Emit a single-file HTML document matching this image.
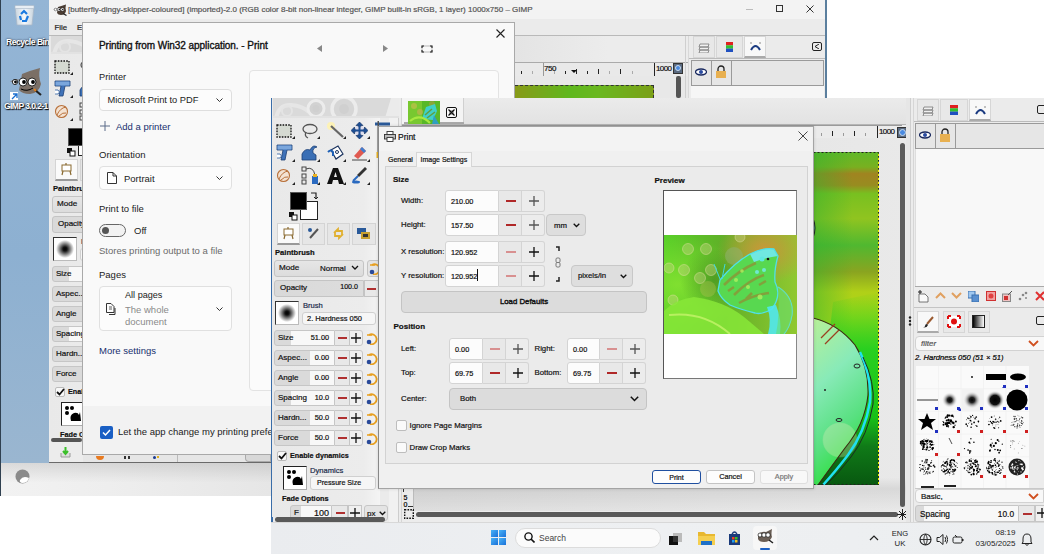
<!DOCTYPE html>
<html><head><meta charset="utf-8">
<style>
*{margin:0;padding:0;box-sizing:border-box}
html,body{width:1044px;height:554px;overflow:hidden;background:#fff;font-family:"Liberation Sans",sans-serif;position:relative}
.a{position:absolute}
.t{position:absolute;white-space:nowrap;line-height:1;color:#1a1a1a;-webkit-text-stroke:.2px currentColor}
.b{font-weight:bold}
</style></head><body>
<div class="a" style="left:0px;top:0px;width:49px;height:463px;background:linear-gradient(180deg,#94b5d5,#8db0d1 55%,#9ab6d0);border-left:1px solid #2f4050"></div>
<svg class="a" style="left:14px;top:4px;" width="21" height="22" viewBox="0 0 21 22"><defs><linearGradient id="rb" x1="0" y1="0" x2="1" y2="0"><stop offset="0" stop-color="#c8d4de"/><stop offset=".5" stop-color="#f4f7fa"/><stop offset="1" stop-color="#c8d4de"/></linearGradient></defs><path d="M1 3 H20 L18 21 H3 Z" fill="url(#rb)" stroke="#a8b8c8" stroke-width=".8"/><rect x="1" y="1.5" width="19" height="3" fill="#e8eef4" stroke="#a8b8c8" stroke-width=".6"/><path d="M7 10 L10 7 L13 10 M14 12 L12 17 H8 M7 16 L6 12" fill="none" stroke="#1a7ae0" stroke-width="2.2"/></svg>
<div class="t" style="left:6px;top:37.7px;font-size:8.6px;-webkit-text-stroke:0;color:#fff;font-weight:bold;text-shadow:1px 1px 1px #000,0 0 2px #223;letter-spacing:-.5px">Recycle Bin</div>
<svg class="a" style="left:8px;top:66px;" width="36" height="31" viewBox="0 0 36 31"><path d="M14 8 Q24 4 32 2 Q30 10 33 18 Q31 27 22 28 Q14 28 11 24 Z" fill="#7b6f66"/><path d="M2 16 Q6 12 12 14" fill="#7b6f66"/><circle cx="7" cy="16" r="2.6" fill="#fff" stroke="#000" stroke-width=".8"/><circle cx="15" cy="16" r="4" fill="#fff" stroke="#000" stroke-width=".8"/><circle cx="24" cy="16" r="4" fill="#fff" stroke="#000" stroke-width=".8"/><circle cx="7.5" cy="16" r="1.4"/><circle cx="16" cy="16" r="1.9"/><circle cx="25" cy="16" r="1.9"/><path d="M13 23 Q19 26 25 22" fill="none" stroke="#000" stroke-width="1"/><path d="M27 24 L33 29" stroke="#222" stroke-width="2.2"/><path d="M26 23 L28 25" stroke="#e08020" stroke-width="2"/></svg>
<div class="a" style="left:10px;top:92px;width:8px;height:8px;background:#fff"></div>
<svg class="a" style="left:11px;top:93px;" width="7" height="7" viewBox="0 0 7 7"><path d="M1 6 L6 1 M2 1 H6 V5" fill="none" stroke="#1a6fd0" stroke-width="1.3"/></svg>
<div class="t" style="left:4px;top:102.2px;font-size:8.6px;-webkit-text-stroke:0;color:#fff;font-weight:bold;text-shadow:1px 1px 1px #000,0 0 2px #223;letter-spacing:-.6px">GIMP 3.0.2-1</div>
<div class="a" style="left:49px;top:0px;width:778px;height:463px;background:#ececec"></div>
<div class="a" style="left:825px;top:0px;width:2px;height:463px;background:#5b7f9e"></div>
<div class="a" style="left:49px;top:0px;width:776px;height:19px;background:#f3f3f3"></div>
<svg class="a" style="left:53px;top:4px;" width="14" height="12" viewBox="0 0 14 12"><path d="M5 3 Q9 1.5 13 0.5 Q12 4 13 7 Q12 11 8 11 Q5 11 4 9 Z" fill="#4a3c32"/><path d="M0.5 6 Q2 4 5 5" fill="#4a3c32"/><circle cx="2.5" cy="5.5" r="1.3" fill="#fff" stroke="#000" stroke-width=".4"/><circle cx="6" cy="5.5" r="1.7" fill="#fff" stroke="#000" stroke-width=".4"/><circle cx="9.5" cy="5.5" r="1.7" fill="#fff" stroke="#000" stroke-width=".4"/><circle cx="6.3" cy="5.5" r=".7"/><circle cx="9.8" cy="5.5" r=".7"/><path d="M10 9.5 L13.5 11.5" stroke="#222" stroke-width="1.2"/></svg>
<div class="t" style="left:68px;top:6.0px;font-size:8px;color:#555">[butterfly-dingy-skipper-coloured] (imported)-2.0 (RGB color 8-bit non-linear integer, GIMP built-in sRGB, 1 layer) 1000x750 – GIMP</div>
<div class="a" style="left:746px;top:9px;width:7px;height:1px;background:#bbb"></div>
<div class="a" style="left:776px;top:5px;width:7px;height:7px;border:1.2px solid #333"></div>
<svg class="a" style="left:806px;top:5px;" width="8" height="8" viewBox="0 0 8 8"><path d="M0.5 0.5 L7.5 7.5 M7.5 0.5 L0.5 7.5" stroke="#333" stroke-width="1"/></svg>
<div class="a" style="left:49px;top:19px;width:776px;height:16px;background:#ebebeb"></div>
<div class="a" style="left:49px;top:35px;width:776px;height:1px;background:#b9b9b9"></div>
<div class="t" style="left:54.5px;top:24.1px;font-size:7.8px;color:#1a1a1a">File</div>
<div class="t" style="left:77px;top:24.1px;font-size:7.8px;color:#1a1a1a">Ed</div>
<div class="a" style="left:49px;top:36px;width:34px;height:402px;overflow:hidden;">
<div class="a" style="left:1px;top:-2px;width:108px;height:602px;background:linear-gradient(90deg,#e9e9e9,#ececec 85%,#f4f4f4)"></div>
<svg class="a" style="left:2px;top:-2px;" width="126" height="20" viewBox="0 0 126 20"><rect width="126" height="20" fill="#ebebeb"/><path d="M0 0 H118 L112 20 H0 Z" fill="#dadada"/><path d="M3 20 Q6 6 18 7 Q30 8 36 14" fill="none" stroke="#e6e6e6" stroke-width="4"/><circle cx="14" cy="13" r="5" fill="none" stroke="#e4e4e4" stroke-width="2"/><circle cx="43" cy="10.5" r="8" fill="#d2d2d2" stroke="#ececec" stroke-width="3"/><circle cx="43" cy="10.5" r="3.5" fill="#cfcfcf"/><circle cx="71" cy="11" r="12" fill="#d6d6d6" stroke="#ececec" stroke-width="3.5"/><circle cx="71" cy="11" r="5" fill="#d0d0d0"/><rect y="18" width="126" height="2" fill="#e2e2e2"/></svg>
<svg class="a" style="left:5px;top:24px;" width="16" height="14" viewBox="0 0 16 14"><rect x="1" y="1" width="14" height="12" fill="#d5dad2" stroke="#111" stroke-width="1.3" stroke-dasharray="1.6,1.2"/></svg>
<svg class="a" style="left:30px;top:23px;" width="17" height="16" viewBox="0 0 17 16"><ellipse cx="9" cy="6" rx="7" ry="4.5" fill="none" stroke="#555" stroke-width="1.3"/><path d="M5 9 Q3 13 7 15" fill="none" stroke="#555" stroke-width="1.2"/></svg>
<svg class="a" style="left:56px;top:22px;" width="18" height="17" viewBox="0 0 18 17"><circle cx="4" cy="4" r="4" fill="#fff3b0" opacity=".9"/><line x1="4" y1="4" x2="16" y2="15" stroke="#666" stroke-width="2.2"/></svg>
<svg class="a" style="left:80px;top:22px;" width="17" height="17" viewBox="0 0 17 17"><path d="M8.5 0 L12 3.5 H10 V7 H13.5 V5 L17 8.5 L13.5 12 V10 H10 V13.5 H12 L8.5 17 L5 13.5 H7 V10 H3.5 V12 L0 8.5 L3.5 5 V7 H7 V3.5 H5 Z" fill="#1e4f94" stroke="#0d2d5e" stroke-width=".6"/><rect x="4.5" y="4.5" width="3" height="3" fill="#dde"/><rect x="9.5" y="4.5" width="3" height="3" fill="#dde"/><rect x="4.5" y="9.5" width="3" height="3" fill="#dde"/><rect x="9.5" y="9.5" width="3" height="3" fill="#dde"/></svg>
<svg class="a" style="left:103px;top:21px;" width="16" height="40" viewBox="0 0 16 40"><rect x="1" y="1.5" width="15" height="3" fill="#2a5a9a"/><rect x="3.5" y="0" width="1.5" height="36" fill="#555"/><rect x="2.5" y="31" width="4" height="6" fill="#e8b020"/></svg>
<svg class="a" style="left:5px;top:44px;" width="17" height="18" viewBox="0 0 17 18"><path d="M1 1 H16 V6 H11 L9 16 H5 L7 6 H1 Z" fill="#3f72b8" stroke="#1d3f73" stroke-width=".8"/><rect x="1.5" y="1.5" width="14" height="4" fill="#7aa6dc"/><path d="M1 10 H4 L5.5 12 L4 14 H1" fill="#fff" stroke="#2a5aa0" stroke-width=".8"/></svg>
<svg class="a" style="left:30px;top:44px;" width="18" height="17" viewBox="0 0 18 17"><path d="M1 16 V10 Q4 4 9 6 Q12 0 16 3 Q11 4 12 9 L15 11 V16 Z" fill="#3a6fb5" stroke="#1d3f73" stroke-width=".8"/></svg>
<svg class="a" style="left:56px;top:44px;" width="18" height="17" viewBox="0 0 18 17"><path d="M4 6 L11 2 L16 10 L9 15 Z" fill="#fff" stroke="#1d3560" stroke-width="1.2"/><circle cx="10" cy="8" r="1.5" fill="none" stroke="#1d3560"/><path d="M1 8 Q4 5 6 8 V12" fill="none" stroke="#1d5fb5" stroke-width="2"/></svg>
<svg class="a" style="left:80px;top:44px;" width="17" height="17" viewBox="0 0 17 17"><path d="M3 12 L11 3 L15 7 L7 15 Z" fill="#e05a50"/><path d="M9 5 L11 3 L15 7 L13 9 Z" fill="#3f7fd0"/><line x1="1" y1="16" x2="16" y2="16" stroke="#444" stroke-width="1"/></svg>
<svg class="a" style="left:5px;top:68px;" width="15" height="15" viewBox="0 0 15 15"><circle cx="7.5" cy="7.5" r="6" fill="#f3e2d2" stroke="#b8703a" stroke-width="1.1"/><path d="M3 11 Q6 4 12 3 M5 12 Q9 8 12 9" fill="none" stroke="#b8703a" stroke-width="1"/></svg>
<svg class="a" style="left:30px;top:66px;" width="18" height="19" viewBox="0 0 18 19"><rect x="1" y="1" width="4" height="4" fill="none" stroke="#444"/><rect x="1" y="8" width="4" height="4" fill="none" stroke="#444"/><rect x="1" y="14" width="4" height="4" fill="none" stroke="#444"/><path d="M5 3 Q12 0 14 9" fill="none" stroke="#444"/><rect x="11" y="10" width="6" height="8" fill="#2a6ac0"/><rect x="12" y="8" width="4" height="3" fill="#e8b020"/></svg>
<svg class="a" style="left:55px;top:67px;" width="19" height="17" viewBox="0 0 19 17"><path d="M1 17 L7 1 H12 L18 17 H13 L12 13 H7 L6 17 Z M8 10 H11 L9.5 5 Z" fill="#111"/></svg>
<svg class="a" style="left:80px;top:66px;" width="17" height="18" viewBox="0 0 17 18"><path d="M14 1 L16 3 L8 11 L6 9 Z" fill="#333"/><path d="M7 10 L2 15" stroke="#2a6ac0" stroke-width="2"/><ellipse cx="5" cy="16" rx="4" ry="1.5" fill="#2a6ac0"/></svg>
<svg class="a" style="left:21px;top:36px;" width="3" height="3" viewBox="0 0 3 3"><path d="M3 0 V3 H0 Z" fill="#222"/></svg>
<svg class="a" style="left:46px;top:36px;" width="3" height="3" viewBox="0 0 3 3"><path d="M3 0 V3 H0 Z" fill="#222"/></svg>
<svg class="a" style="left:72px;top:36px;" width="3" height="3" viewBox="0 0 3 3"><path d="M3 0 V3 H0 Z" fill="#222"/></svg>
<svg class="a" style="left:96px;top:36px;" width="3" height="3" viewBox="0 0 3 3"><path d="M3 0 V3 H0 Z" fill="#222"/></svg>
<svg class="a" style="left:21px;top:59px;" width="3" height="3" viewBox="0 0 3 3"><path d="M3 0 V3 H0 Z" fill="#222"/></svg>
<svg class="a" style="left:46px;top:59px;" width="3" height="3" viewBox="0 0 3 3"><path d="M3 0 V3 H0 Z" fill="#222"/></svg>
<svg class="a" style="left:72px;top:59px;" width="3" height="3" viewBox="0 0 3 3"><path d="M3 0 V3 H0 Z" fill="#222"/></svg>
<svg class="a" style="left:96px;top:59px;" width="3" height="3" viewBox="0 0 3 3"><path d="M3 0 V3 H0 Z" fill="#222"/></svg>
<svg class="a" style="left:21px;top:82px;" width="3" height="3" viewBox="0 0 3 3"><path d="M3 0 V3 H0 Z" fill="#222"/></svg>
<svg class="a" style="left:46px;top:82px;" width="3" height="3" viewBox="0 0 3 3"><path d="M3 0 V3 H0 Z" fill="#222"/></svg>
<svg class="a" style="left:72px;top:82px;" width="3" height="3" viewBox="0 0 3 3"><path d="M3 0 V3 H0 Z" fill="#222"/></svg>
<svg class="a" style="left:96px;top:82px;" width="3" height="3" viewBox="0 0 3 3"><path d="M3 0 V3 H0 Z" fill="#222"/></svg>
<div class="a" style="left:29px;top:101px;width:18px;height:19px;background:#fff;border:1px solid #222"></div>
<div class="a" style="left:19px;top:92px;width:17px;height:18px;background:#000;border:1px solid #555"></div>
<svg class="a" style="left:39px;top:91px;" width="9" height="9" viewBox="0 0 9 9"><path d="M1 2 H6 V7" fill="none" stroke="#222" stroke-width="1.2"/><path d="M4 6 L6 8 L8 6" fill="none" stroke="#222"/></svg>
<svg class="a" style="left:18px;top:112px;" width="9" height="9" viewBox="0 0 9 9"><rect x="0" y="0" width="5" height="5" fill="#111"/><rect x="3" y="3" width="5" height="5" fill="#fff" stroke="#111"/></svg>
<div class="a" style="left:6px;top:123px;width:23px;height:22px;background:#fafafa;border:1px solid #d4d4d4;border-bottom:2px solid #999"></div>
<div class="a" style="left:31px;top:123px;width:23px;height:22px;background:#e6e6e6;border:1px solid #d4d4d4"></div>
<div class="a" style="left:56px;top:123px;width:23px;height:22px;background:#e6e6e6;border:1px solid #d4d4d4"></div>
<div class="a" style="left:81px;top:123px;width:24px;height:22px;background:#e6e6e6;border:1px solid #d4d4d4"></div>
<svg class="a" style="left:11px;top:127px;" width="13" height="13" viewBox="0 0 13 13"><rect x="2" y="2" width="9" height="6" fill="#fff" stroke="#8a6a30"/><path d="M3 8 L2 12 M10 8 L11 12 M6 0 V2" stroke="#8a6a30" stroke-width="1.2"/></svg>
<svg class="a" style="left:36px;top:127px;" width="13" height="13" viewBox="0 0 13 13"><circle cx="3" cy="3" r="2" fill="#2a5a9a"/><path d="M3 11 L11 2" stroke="#555" stroke-width="2"/></svg>
<svg class="a" style="left:61px;top:127px;" width="13" height="13" viewBox="0 0 13 13"><path d="M2 6 L6 2 V4 H10 V8 M11 7 L7 11 V9 H3 V5" fill="none" stroke="#e0b030" stroke-width="1.8"/></svg>
<svg class="a" style="left:86px;top:127px;" width="13" height="13" viewBox="0 0 13 13"><rect x="0" y="1" width="9" height="6" fill="#2a5a9a"/><rect x="4" y="5" width="9" height="7" fill="#c8a030"/><rect x="6" y="7" width="5" height="3" fill="#333"/></svg>
<div class="t" style="left:4px;top:149.2px;font-size:7.6px;font-weight:bold;color:#111">Paintbrush</div>
<div class="a" style="left:3px;top:160px;width:90px;height:17px;background:linear-gradient(#e6e6e6,#dcdcdc);border:1px solid #c4c4c4;border-radius:3px"></div>
<div class="t" style="left:8px;top:164.4px;font-size:8.1px;color:#111">Mode</div>
<div class="t" style="left:49px;top:164.5px;font-size:8px;color:#111">Normal</div>
<svg class="a" style="left:80px;top:165px;" width="8" height="6" viewBox="0 0 8 6"><path d="M1 1 L4 4 L7 1" fill="none" stroke="#111" stroke-width="1.3"/></svg>
<div class="a" style="left:96px;top:160px;width:14px;height:17px;background:#e4e4e4;border:1px solid #c4c4c4;border-radius:3px"></div>
<svg class="a" style="left:97px;top:162px;" width="13" height="13" viewBox="0 0 13 13"><path d="M4 3 A5 5 0 1 1 5 12" fill="none" stroke="#e8a020" stroke-width="1.8"/><circle cx="4" cy="10" r="2.3" fill="#2a4a9a"/><path d="M2 3 H7" stroke="#e8a020" stroke-width="1.5"/></svg>
<div class="a" style="left:3px;top:180px;width:90px;height:17px;background:linear-gradient(90deg,#d9d9d9,#dddddd);border:1px solid #c4c4c4;border-radius:3px 0 0 3px"></div>
<div class="t" style="left:9px;top:183.5px;font-size:8px;color:#111">Opacity</div>
<div class="t" style="left:29px;top:183.9px;font-size:7.1px;width:58px;text-align:right;color:#111">100.0</div>
<div class="a" style="left:93px;top:180px;width:16px;height:17px;background:#e8e8e8;border:1px solid #c4c4c4"></div>
<div class="a" style="left:96px;top:188px;width:9px;height:2px;background:#b03030"></div>
<div class="a" style="left:4px;top:201px;width:24px;height:24px;background:radial-gradient(circle,#000 0,#111 2px,#777 5px,#fff 9px);border:1px solid #333;border-right-color:#bbb;border-bottom-color:#bbb"></div>
<div class="t" style="left:32px;top:201.7px;font-size:7.6px;color:#1a2a4a">Brush</div>
<div class="a" style="left:31px;top:212px;width:74px;height:13px;background:#f6f6f6;border:1px solid #d0d0d0;border-radius:3px"></div>
<div class="t" style="left:36px;top:215.2px;font-size:7.5px;color:#111">2. Hardness 050</div>
<div class="a" style="left:3px;top:230px;width:61px;height:16px;background:linear-gradient(90deg,#dadada 0,#dadada 16px,#f8f8f8 16px);border:1px solid #c6c6c6;border-radius:3px 0 0 3px"></div>
<div class="t" style="left:7px;top:233.5px;font-size:8px;color:#111">Size</div>
<div class="t" style="left:19px;top:233.8px;font-size:7.3px;width:39px;text-align:right;color:#111">51.00</div>
<div class="a" style="left:64px;top:230px;width:15px;height:16px;background:#e8e8e8;border:1px solid #c6c6c6;border-left:none"></div>
<div class="a" style="left:67px;top:237px;width:9px;height:2px;background:#b03030"></div>
<div class="a" style="left:78px;top:230px;width:14px;height:16px;background:#f0f0f0;border:1px solid #c6c6c6;border-radius:0 3px 3px 0"></div>
<svg class="a" style="left:80px;top:233px;" width="10" height="10" viewBox="0 0 10 10"><path d="M5 0 V10 M0 5 H10" stroke="#111" stroke-width="1.3"/></svg>
<svg class="a" style="left:94px;top:232px;" width="13" height="13" viewBox="0 0 13 13"><path d="M4 3 A5 5 0 1 1 5 12" fill="none" stroke="#e8a020" stroke-width="1.8"/><circle cx="4" cy="10" r="2.3" fill="#2a4a9a"/><path d="M2 3 H7" stroke="#e8a020" stroke-width="1.5"/></svg>
<div class="a" style="left:3px;top:250px;width:61px;height:16px;background:linear-gradient(90deg,#dadada 0,#dadada 35px,#f8f8f8 35px);border:1px solid #c6c6c6;border-radius:3px 0 0 3px"></div>
<div class="t" style="left:7px;top:253.5px;font-size:8px;color:#111">Aspec...</div>
<div class="t" style="left:19px;top:253.8px;font-size:7.3px;width:39px;text-align:right;color:#111">0.00</div>
<div class="a" style="left:64px;top:250px;width:15px;height:16px;background:#e8e8e8;border:1px solid #c6c6c6;border-left:none"></div>
<div class="a" style="left:67px;top:257px;width:9px;height:2px;background:#b03030"></div>
<div class="a" style="left:78px;top:250px;width:14px;height:16px;background:#f0f0f0;border:1px solid #c6c6c6;border-radius:0 3px 3px 0"></div>
<svg class="a" style="left:80px;top:253px;" width="10" height="10" viewBox="0 0 10 10"><path d="M5 0 V10 M0 5 H10" stroke="#111" stroke-width="1.3"/></svg>
<svg class="a" style="left:94px;top:252px;" width="13" height="13" viewBox="0 0 13 13"><path d="M4 3 A5 5 0 1 1 5 12" fill="none" stroke="#e8a020" stroke-width="1.8"/><circle cx="4" cy="10" r="2.3" fill="#2a4a9a"/><path d="M2 3 H7" stroke="#e8a020" stroke-width="1.5"/></svg>
<div class="a" style="left:3px;top:270px;width:61px;height:16px;background:linear-gradient(90deg,#dadada 0,#dadada 35px,#f8f8f8 35px);border:1px solid #c6c6c6;border-radius:3px 0 0 3px"></div>
<div class="t" style="left:7px;top:273.5px;font-size:8px;color:#111">Angle</div>
<div class="t" style="left:19px;top:273.9px;font-size:7.3px;width:39px;text-align:right;color:#111">0.00</div>
<div class="a" style="left:64px;top:270px;width:15px;height:16px;background:#e8e8e8;border:1px solid #c6c6c6;border-left:none"></div>
<div class="a" style="left:67px;top:277px;width:9px;height:2px;background:#b03030"></div>
<div class="a" style="left:78px;top:270px;width:14px;height:16px;background:#f0f0f0;border:1px solid #c6c6c6;border-radius:0 3px 3px 0"></div>
<svg class="a" style="left:80px;top:273px;" width="10" height="10" viewBox="0 0 10 10"><path d="M5 0 V10 M0 5 H10" stroke="#111" stroke-width="1.3"/></svg>
<svg class="a" style="left:94px;top:272px;" width="13" height="13" viewBox="0 0 13 13"><path d="M4 3 A5 5 0 1 1 5 12" fill="none" stroke="#e8a020" stroke-width="1.8"/><circle cx="4" cy="10" r="2.3" fill="#2a4a9a"/><path d="M2 3 H7" stroke="#e8a020" stroke-width="1.5"/></svg>
<div class="a" style="left:3px;top:290px;width:61px;height:16px;background:linear-gradient(90deg,#dadada 0,#dadada 16px,#f8f8f8 16px);border:1px solid #c6c6c6;border-radius:3px 0 0 3px"></div>
<div class="t" style="left:7px;top:293.5px;font-size:8px;color:#111">Spacing</div>
<div class="t" style="left:19px;top:293.9px;font-size:7.3px;width:39px;text-align:right;color:#111">10.0</div>
<div class="a" style="left:64px;top:290px;width:15px;height:16px;background:#e8e8e8;border:1px solid #c6c6c6;border-left:none"></div>
<div class="a" style="left:67px;top:297px;width:9px;height:2px;background:#b03030"></div>
<div class="a" style="left:78px;top:290px;width:14px;height:16px;background:#f0f0f0;border:1px solid #c6c6c6;border-radius:0 3px 3px 0"></div>
<svg class="a" style="left:80px;top:293px;" width="10" height="10" viewBox="0 0 10 10"><path d="M5 0 V10 M0 5 H10" stroke="#111" stroke-width="1.3"/></svg>
<svg class="a" style="left:94px;top:292px;" width="13" height="13" viewBox="0 0 13 13"><path d="M4 3 A5 5 0 1 1 5 12" fill="none" stroke="#e8a020" stroke-width="1.8"/><circle cx="4" cy="10" r="2.3" fill="#2a4a9a"/><path d="M2 3 H7" stroke="#e8a020" stroke-width="1.5"/></svg>
<div class="a" style="left:3px;top:310px;width:61px;height:16px;background:linear-gradient(90deg,#dadada 0,#dadada 35px,#f8f8f8 35px);border:1px solid #c6c6c6;border-radius:3px 0 0 3px"></div>
<div class="t" style="left:7px;top:313.5px;font-size:8px;color:#111">Hardn...</div>
<div class="t" style="left:19px;top:313.9px;font-size:7.3px;width:39px;text-align:right;color:#111">50.0</div>
<div class="a" style="left:64px;top:310px;width:15px;height:16px;background:#e8e8e8;border:1px solid #c6c6c6;border-left:none"></div>
<div class="a" style="left:67px;top:317px;width:9px;height:2px;background:#b03030"></div>
<div class="a" style="left:78px;top:310px;width:14px;height:16px;background:#f0f0f0;border:1px solid #c6c6c6;border-radius:0 3px 3px 0"></div>
<svg class="a" style="left:80px;top:313px;" width="10" height="10" viewBox="0 0 10 10"><path d="M5 0 V10 M0 5 H10" stroke="#111" stroke-width="1.3"/></svg>
<svg class="a" style="left:94px;top:312px;" width="13" height="13" viewBox="0 0 13 13"><path d="M4 3 A5 5 0 1 1 5 12" fill="none" stroke="#e8a020" stroke-width="1.8"/><circle cx="4" cy="10" r="2.3" fill="#2a4a9a"/><path d="M2 3 H7" stroke="#e8a020" stroke-width="1.5"/></svg>
<div class="a" style="left:3px;top:330px;width:61px;height:16px;background:linear-gradient(90deg,#dadada 0,#dadada 35px,#f8f8f8 35px);border:1px solid #c6c6c6;border-radius:3px 0 0 3px"></div>
<div class="t" style="left:7px;top:333.5px;font-size:8px;color:#111">Force</div>
<div class="t" style="left:19px;top:333.9px;font-size:7.3px;width:39px;text-align:right;color:#111">50.0</div>
<div class="a" style="left:64px;top:330px;width:15px;height:16px;background:#e8e8e8;border:1px solid #c6c6c6;border-left:none"></div>
<div class="a" style="left:67px;top:337px;width:9px;height:2px;background:#b03030"></div>
<div class="a" style="left:78px;top:330px;width:14px;height:16px;background:#f0f0f0;border:1px solid #c6c6c6;border-radius:0 3px 3px 0"></div>
<svg class="a" style="left:80px;top:333px;" width="10" height="10" viewBox="0 0 10 10"><path d="M5 0 V10 M0 5 H10" stroke="#111" stroke-width="1.3"/></svg>
<svg class="a" style="left:94px;top:332px;" width="13" height="13" viewBox="0 0 13 13"><path d="M4 3 A5 5 0 1 1 5 12" fill="none" stroke="#e8a020" stroke-width="1.8"/><circle cx="4" cy="10" r="2.3" fill="#2a4a9a"/><path d="M2 3 H7" stroke="#e8a020" stroke-width="1.5"/></svg>
<div class="a" style="left:6px;top:351px;width:10px;height:10px;background:#f8f8f8;border:1px solid #bbb;border-radius:2px"></div>
<svg class="a" style="left:7px;top:352px;" width="9" height="8" viewBox="0 0 9 8"><path d="M1 4 L3.5 6.5 L8 1" fill="none" stroke="#111" stroke-width="1.8"/></svg>
<div class="t" style="left:19px;top:352.4px;font-size:7.2px;font-weight:bold;color:#111">Enable dynamics</div>
<div class="a" style="left:12px;top:366px;width:24px;height:24px;background:#fff;border:1px solid #222;border-right-color:#aaa;border-bottom-color:#aaa"></div>
<svg class="a" style="left:14px;top:368px;" width="20" height="20" viewBox="0 0 20 20"><circle cx="4" cy="4" r="2" fill="#000"/><circle cx="9" cy="4" r="2" fill="#000"/><circle cx="4" cy="9" r="2" fill="#000"/><path d="M8 17 Q6 11 11 9 Q15 8 16 11 L17 8 L18 17 Z" fill="#000"/></svg>
<div class="t" style="left:39px;top:366.7px;font-size:7.6px;color:#1a2a4a">Dynamics</div>
<div class="a" style="left:39px;top:376px;width:66px;height:14px;background:#f6f6f6;border:1px solid #d0d0d0;border-radius:3px"></div>
<div class="t" style="left:46px;top:379.9px;font-size:7.1px;color:#111">Pressure Size</div>
<div class="t" style="left:11px;top:394.9px;font-size:7.3px;font-weight:bold;color:#111">Fade Options</div>
<div class="a" style="left:19px;top:405px;width:42px;height:16px;background:linear-gradient(90deg,#dadada 0,#dadada 10px,#f8f8f8 10px);border:1px solid #c6c6c6;border-radius:3px 0 0 3px"></div>
<div class="t" style="left:23px;top:409.0px;font-size:8px;color:#111">F</div>
<div class="t" style="left:29px;top:408.5px;font-size:9px;width:29px;text-align:right;color:#111">100</div>
<div class="a" style="left:61px;top:405px;width:16px;height:16px;background:#e8e8e8;border:1px solid #c6c6c6;border-left:none"></div>
<div class="a" style="left:65px;top:412px;width:9px;height:2px;background:#b03030"></div>
<div class="a" style="left:77px;top:405px;width:14px;height:16px;background:#f0f0f0;border:1px solid #c6c6c6"></div>
<svg class="a" style="left:79px;top:408px;" width="10" height="10" viewBox="0 0 10 10"><path d="M5 0 V10 M0 5 H10" stroke="#111" stroke-width="1.3"/></svg>
<div class="a" style="left:93px;top:405px;width:24px;height:16px;background:#e4e4e4;border:1px solid #c6c6c6;border-radius:3px"></div>
<div class="t" style="left:96px;top:410.0px;font-size:8px;color:#111">px</div>
<svg class="a" style="left:108px;top:411px;" width="7" height="5" viewBox="0 0 7 5"><path d="M.7 .7 L3.5 3.5 L6.3 .7" fill="none" stroke="#111" stroke-width="1.3"/></svg>
</div>
<div class="a" style="left:51px;top:438px;width:31px;height:4px;background:#555;border-radius:2px"></div>
<div class="a" style="left:49px;top:442px;width:34px;height:21px;background:#ececec"></div>
<svg class="a" style="left:60px;top:447px;" width="11" height="11" viewBox="0 0 11 11"><path d="M1 6 V10 H10 V6" fill="#ddd" stroke="#999"/><path d="M5.5 0 V6 M3 4 L5.5 7 L8 4" fill="none" stroke="#3bbf2a" stroke-width="2"/></svg>
<div class="a" style="left:515px;top:36px;width:310px;height:26px;background:linear-gradient(90deg,#e4e4e4,#ececec 30%,#ececec)"></div>
<div class="a" style="left:515px;top:62px;width:173px;height:1px;background:#aaa"></div>
<div class="a" style="left:515px;top:63px;width:158px;height:13px;background:#e9e9e9"></div>
<svg class="a" style="left:515px;top:63px;" width="158" height="13" viewBox="0 0 158 13"><g stroke="#222" stroke-width="1"><line x1="28.5" y1="0" x2="28.5" y2="13" stroke="#999"/><line x1="139.5" y1="0" x2="139.5" y2="13"/><line x1="6.5" y1="8" x2="6.5" y2="11"/><line x1="50.5" y1="8" x2="50.5" y2="11"/><line x1="61.5" y1="6" x2="61.5" y2="11"/><line x1="72.5" y1="8" x2="72.5" y2="11"/><line x1="83.5" y1="6" x2="83.5" y2="11"/><line x1="105.5" y1="6" x2="105.5" y2="11"/><line x1="117.5" y1="8" x2="117.5" y2="11" stroke="#aaa"/><line x1="17.5" y1="8" x2="17.5" y2="11" stroke="#aaa"/><line x1="39.5" y1="8" x2="39.5" y2="11" stroke="#aaa"/><line x1="94.5" y1="8" x2="94.5" y2="11" stroke="#aaa"/></g><path d="M56 7 L62 7 L59 10 Z" fill="#111"/></svg>
<div class="t" style="left:544px;top:64.5px;font-size:8px;color:#111;letter-spacing:-.5px">750</div>
<div class="t" style="left:656px;top:64.5px;font-size:8px;color:#111;letter-spacing:-.6px">1000</div>
<div class="a" style="left:673px;top:63px;width:10px;height:11px;background:#5a6a80;border:1px solid #333"></div>
<div class="a" style="left:675px;top:65px;width:6px;height:6px;background:#4a8ae0;border-radius:3px;border:1px solid #cde"></div>
<div class="a" style="left:515px;top:76px;width:173px;height:22px;background:#e8e8e8"></div>
<div class="a" style="left:515px;top:85px;width:139px;height:13px;background:linear-gradient(90deg,#889a18,#5fb81e 40%,#6ab820 60%,#7aa018);border-top:1px dashed #333;border-right:1px dashed #333"></div>
<div class="a" style="left:676px;top:76px;width:5px;height:22px;background:#555;border-radius:2px"></div>
<div class="a" style="left:685px;top:36px;width:1px;height:62px;background:#cfcfcf"></div>
<div class="a" style="left:688px;top:36px;width:1px;height:62px;background:#d8d8d8"></div>
<div class="a" style="left:689px;top:36px;width:136px;height:22px;background:#ebebeb"></div>
<div class="a" style="left:693px;top:36px;width:22px;height:22px;background:#e8e8e8;border:1px solid #d6d6d6"></div>
<div class="a" style="left:716px;top:36px;width:27px;height:22px;background:#e8e8e8;border:1px solid #d6d6d6"></div>
<div class="a" style="left:744px;top:36px;width:22px;height:22px;background:#f8f8f8;border:1px solid #d6d6d6;border-bottom:2px solid #aaa"></div>
<svg class="a" style="left:698px;top:41px;" width="12" height="12" viewBox="0 0 12 12"><path d="M2 3 H11 L10 6 H1 Z M2 6 H11 L10 9 H1 Z M2 9 H11 L10 12 H1 Z" fill="#f0f0f0" stroke="#777" stroke-width=".8"/></svg>
<svg class="a" style="left:726px;top:42px;" width="7" height="10" viewBox="0 0 7 10"><rect width="7" height="3.4" fill="#e02020"/><rect y="3.3" width="7" height="3.4" fill="#30c030"/><rect y="6.6" width="7" height="3.4" fill="#2050c0"/></svg>
<svg class="a" style="left:749px;top:41px;" width="13" height="10" viewBox="0 0 13 10"><path d="M1 2 H3 M10 2 H12" stroke="#888"/><path d="M2 9 Q6.5 1 11 9" fill="none" stroke="#1a3a80" stroke-width="2"/></svg>
<div class="a" style="left:812px;top:42px;width:10px;height:9px;border:1.3px solid #222;border-radius:2px"></div>
<svg class="a" style="left:814px;top:44px;" width="6" height="5" viewBox="0 0 6 5"><path d="M5 0 L1 2.5 L5 5" fill="none" stroke="#222"/></svg>
<div class="a" style="left:689px;top:58px;width:136px;height:1px;background:#bbb"></div>
<div class="a" style="left:691px;top:60px;width:133px;height:26px;background:#e6e6e6;border:1px solid #9a9a9a"></div>
<div class="a" style="left:711px;top:60px;width:1px;height:26px;background:#9a9a9a"></div>
<div class="a" style="left:731px;top:60px;width:1px;height:26px;background:#9a9a9a"></div>
<svg class="a" style="left:695px;top:68px;" width="12" height="8" viewBox="0 0 12 8"><ellipse cx="6" cy="4" rx="5.5" ry="3" fill="#fff" stroke="#1a2a60" stroke-width="1.3"/><circle cx="6" cy="4" r="2" fill="#2a4aa0"/></svg>
<svg class="a" style="left:716px;top:65px;" width="10" height="13" viewBox="0 0 10 13"><path d="M2 6 V4 A3 3 0 0 1 8 4 V6" fill="none" stroke="#222" stroke-width="1.3"/><rect x="0" y="6" width="10" height="7" fill="#e8b050"/></svg>
<div class="a" style="left:691px;top:86px;width:133px;height:12px;background:#f6f6f6"></div>
<div class="a" style="left:82px;top:22px;width:433px;height:433px;background:#f9f9f9;border:1px solid #a9a9a9"></div>
<div class="a" style="left:83px;top:406px;width:431px;height:48px;background:#f2f2f2"></div>
<div class="t" style="left:99px;top:40.5px;font-size:10px;-webkit-text-stroke:0;color:#111;-webkit-text-stroke:.35px #111;letter-spacing:-.05px">Printing from Win32 application. - Print</div>
<svg class="a" style="left:317px;top:45px;" width="6" height="7" viewBox="0 0 6 7"><path d="M5 0 L0 3.5 L5 7 Z" fill="#888"/></svg>
<svg class="a" style="left:382px;top:45px;" width="6" height="7" viewBox="0 0 6 7"><path d="M1 0 L6 3.5 L1 7 Z" fill="#888"/></svg>
<svg class="a" style="left:421px;top:45px;" width="12" height="8" viewBox="0 0 12 8"><path d="M1 3 V1 H3 M9 1 H11 V3 M11 5 V7 H9 M3 7 H1 V5" fill="none" stroke="#222" stroke-width="1.1"/><rect x="1" y="1" width="10" height="6" fill="none" stroke="#222" stroke-width=".6" opacity=".5"/></svg>
<svg class="a" style="left:496px;top:29px;" width="9" height="9" viewBox="0 0 9 9"><path d="M0.5 0.5 L8.5 8.5 M8.5 0.5 L0.5 8.5" stroke="#222" stroke-width="1.1"/></svg>
<div class="a" style="left:249px;top:70px;width:250px;height:321px;background:#fbfbfb;border:1px solid #e3e3e3;border-radius:4px"></div>
<div class="t" style="left:99px;top:72.9px;font-size:9.2px;-webkit-text-stroke:0;color:#1b1b1b">Printer</div>
<div class="a" style="left:99px;top:89px;width:133px;height:22px;background:#fcfcfc;border:1px solid #dedede;border-radius:4px"></div>
<div class="t" style="left:107.5px;top:95.8px;font-size:9.3px;-webkit-text-stroke:0;color:#1b1b1b">Microsoft Print to PDF</div>
<svg class="a" style="left:216px;top:98px;" width="7" height="5" viewBox="0 0 7 5"><path d="M.5 .5 L3.5 3.5 L6.5 .5" fill="none" stroke="#333" stroke-width="1"/></svg>
<svg class="a" style="left:100px;top:121px;" width="10" height="10" viewBox="0 0 10 10"><path d="M5 0 V10 M0 5 H10" stroke="#5a6b88" stroke-width="1"/></svg>
<div class="t" style="left:116px;top:121.8px;font-size:9.5px;-webkit-text-stroke:0;color:#17306e">Add a printer</div>
<div class="t" style="left:99px;top:149.8px;font-size:9.5px;-webkit-text-stroke:0;color:#1b1b1b">Orientation</div>
<div class="a" style="left:99px;top:166px;width:133px;height:24px;background:#fcfcfc;border:1px solid #e0e0e0;border-radius:4px"></div>
<svg class="a" style="left:107px;top:172px;" width="10" height="12" viewBox="0 0 10 12"><path d="M.5 .5 H6 L9.5 4 V11.5 H.5 Z M6 .5 V4 H9.5" fill="#fff" stroke="#333" stroke-width="1"/></svg>
<div class="t" style="left:124px;top:173.8px;font-size:9.5px;-webkit-text-stroke:0;color:#1b1b1b">Portrait</div>
<svg class="a" style="left:216px;top:176px;" width="7" height="5" viewBox="0 0 7 5"><path d="M.5 .5 L3.5 3.5 L6.5 .5" fill="none" stroke="#333" stroke-width="1"/></svg>
<div class="t" style="left:99px;top:204.2px;font-size:9.5px;-webkit-text-stroke:0;color:#1b1b1b">Print to file</div>
<div class="a" style="left:99px;top:224px;width:27px;height:13px;background:#f2f2f2;border:1px solid #666;border-radius:7px"></div>
<div class="a" style="left:102px;top:227px;width:7px;height:7px;background:#555;border-radius:50%"></div>
<div class="t" style="left:134px;top:225.8px;font-size:9.5px;-webkit-text-stroke:0;color:#1b1b1b">Off</div>
<div class="t" style="left:99px;top:246.2px;font-size:9.5px;-webkit-text-stroke:0;color:#6b6b6b">Stores printing output to a file</div>
<div class="t" style="left:99px;top:269.8px;font-size:9.5px;-webkit-text-stroke:0;color:#1b1b1b">Pages</div>
<div class="a" style="left:99px;top:286px;width:133px;height:45px;background:#fcfcfc;border:1px solid #e0e0e0;border-radius:4px"></div>
<svg class="a" style="left:106px;top:303px;" width="12" height="12" viewBox="0 0 12 12"><path d="M.5 .5 H5 L8 3.5 V9.5 H.5 Z" fill="none" stroke="#333"/><path d="M3 4 H6 M3 6 H6" stroke="#333" stroke-width=".8"/><path d="M9 5 V11.5 H3" fill="none" stroke="#333"/></svg>
<div class="t" style="left:125px;top:291.4px;font-size:9.1px;-webkit-text-stroke:0;color:#1b1b1b">All pages</div>
<div class="t" style="left:125px;top:304.8px;font-size:9.5px;-webkit-text-stroke:0;color:#8a8a8a">The whole</div>
<div class="t" style="left:125px;top:316.8px;font-size:9.5px;-webkit-text-stroke:0;color:#8a8a8a">document</div>
<svg class="a" style="left:216px;top:307px;" width="7" height="5" viewBox="0 0 7 5"><path d="M.5 .5 L3.5 3.5 L6.5 .5" fill="none" stroke="#333" stroke-width="1"/></svg>
<div class="t" style="left:99px;top:345.8px;font-size:9.5px;-webkit-text-stroke:0;color:#17306e">More settings</div>
<div class="a" style="left:100px;top:426px;width:13px;height:13px;background:#1a5fc4;border-radius:2px"></div>
<svg class="a" style="left:102px;top:428px;" width="9" height="9" viewBox="0 0 9 9"><path d="M1 4.5 L3.5 7 L8 2" fill="none" stroke="#fff" stroke-width="1.5"/></svg>
<div class="t" style="left:118px;top:427.2px;font-size:9.5px;-webkit-text-stroke:0;color:#1b1b1b">Let the app change my printing preferences</div>
<div class="a" style="left:83px;top:455px;width:188px;height:8px;background:#e6e6e6"></div>
<div class="a" style="left:96px;top:456px;width:8px;height:4px;background:#e87a20;border-radius:0 0 4px 4px"></div>
<div class="a" style="left:124px;top:456px;width:2px;height:3px;background:#333"></div>
<div class="a" style="left:128px;top:456px;width:2px;height:3px;background:#333"></div>
<div class="a" style="left:153px;top:456px;width:3px;height:3px;background:#1a3a90;border-radius:50%"></div>
<div class="a" style="left:157px;top:456px;width:2px;height:2px;background:#e0b020"></div>
<div class="a" style="left:177px;top:455px;width:1px;height:8px;background:#bbb"></div>
<div class="a" style="left:245px;top:455px;width:26px;height:7px;background:#d8d8d8;border:1px solid #aaa;border-top:none;border-radius:0 0 0 4px"></div>
<div class="a" style="left:0px;top:463px;width:271px;height:33px;background:linear-gradient(180deg,rgba(0,0,0,.10),rgba(0,0,0,0) 60%),linear-gradient(90deg,#f2f2f2 0,#eeeeee 40%,#e6e6e6 100%)"></div>
<div class="a" style="left:49px;top:462px;width:222px;height:1px;background:#6a6a6a"></div>
<div class="a" style="left:0px;top:463px;width:1px;height:33px;background:#2f4050"></div>
<svg class="a" style="left:15px;top:469px;" width="15" height="15" viewBox="0 0 15 15"><circle cx="7.5" cy="7.5" r="7" fill="#8a8a8a"/><path d="M5 11 Q8 6 14 9 Q13 14 7 14 Q4 13 5 11Z" fill="#fff"/></svg>
<div class="a" style="left:271px;top:98px;width:773px;height:424px;background:#ececec"></div>
<div class="a" style="left:271px;top:98px;width:2px;height:424px;background:#3a6da8"></div>
<div class="a" style="left:380px;top:98px;width:9px;height:424px;background:#ebebeb"></div>
<div class="a" style="left:389px;top:98px;width:9px;height:424px;background:#f1f1f1"></div>
<div class="a" style="left:398px;top:98px;width:1px;height:424px;background:#cdcdcd"></div>
<div class="a" style="left:401px;top:98px;width:1px;height:424px;background:#d5d5d5"></div>
<div class="a" style="left:272px;top:98px;width:108px;height:419px;background:linear-gradient(90deg,#e9e9e9,#ececec 85%,#f4f4f4)"></div>
<svg class="a" style="left:273px;top:98px;" width="126" height="20" viewBox="0 0 126 20"><rect width="126" height="20" fill="#ebebeb"/><path d="M0 0 H118 L112 20 H0 Z" fill="#dadada"/><path d="M3 20 Q6 6 18 7 Q30 8 36 14" fill="none" stroke="#e6e6e6" stroke-width="4"/><circle cx="14" cy="13" r="5" fill="none" stroke="#e4e4e4" stroke-width="2"/><circle cx="43" cy="10.5" r="8" fill="#d2d2d2" stroke="#ececec" stroke-width="3"/><circle cx="43" cy="10.5" r="3.5" fill="#cfcfcf"/><circle cx="71" cy="11" r="12" fill="#d6d6d6" stroke="#ececec" stroke-width="3.5"/><circle cx="71" cy="11" r="5" fill="#d0d0d0"/><rect y="18" width="126" height="2" fill="#e2e2e2"/></svg>
<svg class="a" style="left:276px;top:124px;" width="16" height="14" viewBox="0 0 16 14"><rect x="1" y="1" width="14" height="12" fill="#d5dad2" stroke="#111" stroke-width="1.3" stroke-dasharray="1.6,1.2"/></svg>
<svg class="a" style="left:301px;top:123px;" width="17" height="16" viewBox="0 0 17 16"><ellipse cx="9" cy="6" rx="7" ry="4.5" fill="none" stroke="#555" stroke-width="1.3"/><path d="M5 9 Q3 13 7 15" fill="none" stroke="#555" stroke-width="1.2"/></svg>
<svg class="a" style="left:327px;top:122px;" width="18" height="17" viewBox="0 0 18 17"><circle cx="4" cy="4" r="4" fill="#fff3b0" opacity=".9"/><line x1="4" y1="4" x2="16" y2="15" stroke="#666" stroke-width="2.2"/></svg>
<svg class="a" style="left:351px;top:122px;" width="17" height="17" viewBox="0 0 17 17"><path d="M8.5 0 L12 3.5 H10 V7 H13.5 V5 L17 8.5 L13.5 12 V10 H10 V13.5 H12 L8.5 17 L5 13.5 H7 V10 H3.5 V12 L0 8.5 L3.5 5 V7 H7 V3.5 H5 Z" fill="#1e4f94" stroke="#0d2d5e" stroke-width=".6"/><rect x="4.5" y="4.5" width="3" height="3" fill="#dde"/><rect x="9.5" y="4.5" width="3" height="3" fill="#dde"/><rect x="4.5" y="9.5" width="3" height="3" fill="#dde"/><rect x="9.5" y="9.5" width="3" height="3" fill="#dde"/></svg>
<svg class="a" style="left:374px;top:121px;" width="16" height="40" viewBox="0 0 16 40"><rect x="1" y="1.5" width="15" height="3" fill="#2a5a9a"/><rect x="3.5" y="0" width="1.5" height="36" fill="#555"/><rect x="2.5" y="31" width="4" height="6" fill="#e8b020"/></svg>
<svg class="a" style="left:276px;top:144px;" width="17" height="18" viewBox="0 0 17 18"><path d="M1 1 H16 V6 H11 L9 16 H5 L7 6 H1 Z" fill="#3f72b8" stroke="#1d3f73" stroke-width=".8"/><rect x="1.5" y="1.5" width="14" height="4" fill="#7aa6dc"/><path d="M1 10 H4 L5.5 12 L4 14 H1" fill="#fff" stroke="#2a5aa0" stroke-width=".8"/></svg>
<svg class="a" style="left:301px;top:144px;" width="18" height="17" viewBox="0 0 18 17"><path d="M1 16 V10 Q4 4 9 6 Q12 0 16 3 Q11 4 12 9 L15 11 V16 Z" fill="#3a6fb5" stroke="#1d3f73" stroke-width=".8"/></svg>
<svg class="a" style="left:327px;top:144px;" width="18" height="17" viewBox="0 0 18 17"><path d="M4 6 L11 2 L16 10 L9 15 Z" fill="#fff" stroke="#1d3560" stroke-width="1.2"/><circle cx="10" cy="8" r="1.5" fill="none" stroke="#1d3560"/><path d="M1 8 Q4 5 6 8 V12" fill="none" stroke="#1d5fb5" stroke-width="2"/></svg>
<svg class="a" style="left:351px;top:144px;" width="17" height="17" viewBox="0 0 17 17"><path d="M3 12 L11 3 L15 7 L7 15 Z" fill="#e05a50"/><path d="M9 5 L11 3 L15 7 L13 9 Z" fill="#3f7fd0"/><line x1="1" y1="16" x2="16" y2="16" stroke="#444" stroke-width="1"/></svg>
<svg class="a" style="left:276px;top:168px;" width="15" height="15" viewBox="0 0 15 15"><circle cx="7.5" cy="7.5" r="6" fill="#f3e2d2" stroke="#b8703a" stroke-width="1.1"/><path d="M3 11 Q6 4 12 3 M5 12 Q9 8 12 9" fill="none" stroke="#b8703a" stroke-width="1"/></svg>
<svg class="a" style="left:301px;top:166px;" width="18" height="19" viewBox="0 0 18 19"><rect x="1" y="1" width="4" height="4" fill="none" stroke="#444"/><rect x="1" y="8" width="4" height="4" fill="none" stroke="#444"/><rect x="1" y="14" width="4" height="4" fill="none" stroke="#444"/><path d="M5 3 Q12 0 14 9" fill="none" stroke="#444"/><rect x="11" y="10" width="6" height="8" fill="#2a6ac0"/><rect x="12" y="8" width="4" height="3" fill="#e8b020"/></svg>
<svg class="a" style="left:326px;top:167px;" width="19" height="17" viewBox="0 0 19 17"><path d="M1 17 L7 1 H12 L18 17 H13 L12 13 H7 L6 17 Z M8 10 H11 L9.5 5 Z" fill="#111"/></svg>
<svg class="a" style="left:351px;top:166px;" width="17" height="18" viewBox="0 0 17 18"><path d="M14 1 L16 3 L8 11 L6 9 Z" fill="#333"/><path d="M7 10 L2 15" stroke="#2a6ac0" stroke-width="2"/><ellipse cx="5" cy="16" rx="4" ry="1.5" fill="#2a6ac0"/></svg>
<svg class="a" style="left:292px;top:136px;" width="3" height="3" viewBox="0 0 3 3"><path d="M3 0 V3 H0 Z" fill="#222"/></svg>
<svg class="a" style="left:317px;top:136px;" width="3" height="3" viewBox="0 0 3 3"><path d="M3 0 V3 H0 Z" fill="#222"/></svg>
<svg class="a" style="left:343px;top:136px;" width="3" height="3" viewBox="0 0 3 3"><path d="M3 0 V3 H0 Z" fill="#222"/></svg>
<svg class="a" style="left:367px;top:136px;" width="3" height="3" viewBox="0 0 3 3"><path d="M3 0 V3 H0 Z" fill="#222"/></svg>
<svg class="a" style="left:292px;top:159px;" width="3" height="3" viewBox="0 0 3 3"><path d="M3 0 V3 H0 Z" fill="#222"/></svg>
<svg class="a" style="left:317px;top:159px;" width="3" height="3" viewBox="0 0 3 3"><path d="M3 0 V3 H0 Z" fill="#222"/></svg>
<svg class="a" style="left:343px;top:159px;" width="3" height="3" viewBox="0 0 3 3"><path d="M3 0 V3 H0 Z" fill="#222"/></svg>
<svg class="a" style="left:367px;top:159px;" width="3" height="3" viewBox="0 0 3 3"><path d="M3 0 V3 H0 Z" fill="#222"/></svg>
<svg class="a" style="left:292px;top:182px;" width="3" height="3" viewBox="0 0 3 3"><path d="M3 0 V3 H0 Z" fill="#222"/></svg>
<svg class="a" style="left:317px;top:182px;" width="3" height="3" viewBox="0 0 3 3"><path d="M3 0 V3 H0 Z" fill="#222"/></svg>
<svg class="a" style="left:343px;top:182px;" width="3" height="3" viewBox="0 0 3 3"><path d="M3 0 V3 H0 Z" fill="#222"/></svg>
<svg class="a" style="left:367px;top:182px;" width="3" height="3" viewBox="0 0 3 3"><path d="M3 0 V3 H0 Z" fill="#222"/></svg>
<div class="a" style="left:300px;top:201px;width:18px;height:19px;background:#fff;border:1px solid #222"></div>
<div class="a" style="left:290px;top:192px;width:17px;height:18px;background:#000;border:1px solid #555"></div>
<svg class="a" style="left:310px;top:191px;" width="9" height="9" viewBox="0 0 9 9"><path d="M1 2 H6 V7" fill="none" stroke="#222" stroke-width="1.2"/><path d="M4 6 L6 8 L8 6" fill="none" stroke="#222"/></svg>
<svg class="a" style="left:289px;top:212px;" width="9" height="9" viewBox="0 0 9 9"><rect x="0" y="0" width="5" height="5" fill="#111"/><rect x="3" y="3" width="5" height="5" fill="#fff" stroke="#111"/></svg>
<div class="a" style="left:277px;top:223px;width:23px;height:22px;background:#fafafa;border:1px solid #d4d4d4;border-bottom:2px solid #999"></div>
<div class="a" style="left:302px;top:223px;width:23px;height:22px;background:#e6e6e6;border:1px solid #d4d4d4"></div>
<div class="a" style="left:327px;top:223px;width:23px;height:22px;background:#e6e6e6;border:1px solid #d4d4d4"></div>
<div class="a" style="left:352px;top:223px;width:24px;height:22px;background:#e6e6e6;border:1px solid #d4d4d4"></div>
<svg class="a" style="left:282px;top:227px;" width="13" height="13" viewBox="0 0 13 13"><rect x="2" y="2" width="9" height="6" fill="#fff" stroke="#8a6a30"/><path d="M3 8 L2 12 M10 8 L11 12 M6 0 V2" stroke="#8a6a30" stroke-width="1.2"/></svg>
<svg class="a" style="left:307px;top:227px;" width="13" height="13" viewBox="0 0 13 13"><circle cx="3" cy="3" r="2" fill="#2a5a9a"/><path d="M3 11 L11 2" stroke="#555" stroke-width="2"/></svg>
<svg class="a" style="left:332px;top:227px;" width="13" height="13" viewBox="0 0 13 13"><path d="M2 6 L6 2 V4 H10 V8 M11 7 L7 11 V9 H3 V5" fill="none" stroke="#e0b030" stroke-width="1.8"/></svg>
<svg class="a" style="left:357px;top:227px;" width="13" height="13" viewBox="0 0 13 13"><rect x="0" y="1" width="9" height="6" fill="#2a5a9a"/><rect x="4" y="5" width="9" height="7" fill="#c8a030"/><rect x="6" y="7" width="5" height="3" fill="#333"/></svg>
<div class="t" style="left:275px;top:249.2px;font-size:7.6px;font-weight:bold;color:#111">Paintbrush</div>
<div class="a" style="left:274px;top:260px;width:90px;height:17px;background:linear-gradient(#e6e6e6,#dcdcdc);border:1px solid #c4c4c4;border-radius:3px"></div>
<div class="t" style="left:279px;top:264.4px;font-size:8.1px;color:#111">Mode</div>
<div class="t" style="left:320px;top:264.5px;font-size:8px;color:#111">Normal</div>
<svg class="a" style="left:351px;top:265px;" width="8" height="6" viewBox="0 0 8 6"><path d="M1 1 L4 4 L7 1" fill="none" stroke="#111" stroke-width="1.3"/></svg>
<div class="a" style="left:367px;top:260px;width:14px;height:17px;background:#e4e4e4;border:1px solid #c4c4c4;border-radius:3px"></div>
<svg class="a" style="left:368px;top:262px;" width="13" height="13" viewBox="0 0 13 13"><path d="M4 3 A5 5 0 1 1 5 12" fill="none" stroke="#e8a020" stroke-width="1.8"/><circle cx="4" cy="10" r="2.3" fill="#2a4a9a"/><path d="M2 3 H7" stroke="#e8a020" stroke-width="1.5"/></svg>
<div class="a" style="left:274px;top:280px;width:90px;height:17px;background:linear-gradient(90deg,#d9d9d9,#dddddd);border:1px solid #c4c4c4;border-radius:3px 0 0 3px"></div>
<div class="t" style="left:280px;top:283.5px;font-size:8px;color:#111">Opacity</div>
<div class="t" style="left:300px;top:283.9px;font-size:7.1px;width:58px;text-align:right;color:#111">100.0</div>
<div class="a" style="left:364px;top:280px;width:16px;height:17px;background:#e8e8e8;border:1px solid #c4c4c4"></div>
<div class="a" style="left:367px;top:288px;width:9px;height:2px;background:#b03030"></div>
<div class="a" style="left:275px;top:301px;width:24px;height:24px;background:radial-gradient(circle,#000 0,#111 2px,#777 5px,#fff 9px);border:1px solid #333;border-right-color:#bbb;border-bottom-color:#bbb"></div>
<div class="t" style="left:303px;top:301.7px;font-size:7.6px;color:#1a2a4a">Brush</div>
<div class="a" style="left:302px;top:312px;width:74px;height:13px;background:#f6f6f6;border:1px solid #d0d0d0;border-radius:3px"></div>
<div class="t" style="left:307px;top:315.2px;font-size:7.5px;color:#111">2. Hardness 050</div>
<div class="a" style="left:274px;top:330px;width:61px;height:16px;background:linear-gradient(90deg,#dadada 0,#dadada 16px,#f8f8f8 16px);border:1px solid #c6c6c6;border-radius:3px 0 0 3px"></div>
<div class="t" style="left:278px;top:333.5px;font-size:8px;color:#111">Size</div>
<div class="t" style="left:290px;top:333.9px;font-size:7.3px;width:39px;text-align:right;color:#111">51.00</div>
<div class="a" style="left:335px;top:330px;width:15px;height:16px;background:#e8e8e8;border:1px solid #c6c6c6;border-left:none"></div>
<div class="a" style="left:338px;top:337px;width:9px;height:2px;background:#b03030"></div>
<div class="a" style="left:349px;top:330px;width:14px;height:16px;background:#f0f0f0;border:1px solid #c6c6c6;border-radius:0 3px 3px 0"></div>
<svg class="a" style="left:351px;top:333px;" width="10" height="10" viewBox="0 0 10 10"><path d="M5 0 V10 M0 5 H10" stroke="#111" stroke-width="1.3"/></svg>
<svg class="a" style="left:365px;top:332px;" width="13" height="13" viewBox="0 0 13 13"><path d="M4 3 A5 5 0 1 1 5 12" fill="none" stroke="#e8a020" stroke-width="1.8"/><circle cx="4" cy="10" r="2.3" fill="#2a4a9a"/><path d="M2 3 H7" stroke="#e8a020" stroke-width="1.5"/></svg>
<div class="a" style="left:274px;top:350px;width:61px;height:16px;background:linear-gradient(90deg,#dadada 0,#dadada 35px,#f8f8f8 35px);border:1px solid #c6c6c6;border-radius:3px 0 0 3px"></div>
<div class="t" style="left:278px;top:353.5px;font-size:8px;color:#111">Aspec...</div>
<div class="t" style="left:290px;top:353.9px;font-size:7.3px;width:39px;text-align:right;color:#111">0.00</div>
<div class="a" style="left:335px;top:350px;width:15px;height:16px;background:#e8e8e8;border:1px solid #c6c6c6;border-left:none"></div>
<div class="a" style="left:338px;top:357px;width:9px;height:2px;background:#b03030"></div>
<div class="a" style="left:349px;top:350px;width:14px;height:16px;background:#f0f0f0;border:1px solid #c6c6c6;border-radius:0 3px 3px 0"></div>
<svg class="a" style="left:351px;top:353px;" width="10" height="10" viewBox="0 0 10 10"><path d="M5 0 V10 M0 5 H10" stroke="#111" stroke-width="1.3"/></svg>
<svg class="a" style="left:365px;top:352px;" width="13" height="13" viewBox="0 0 13 13"><path d="M4 3 A5 5 0 1 1 5 12" fill="none" stroke="#e8a020" stroke-width="1.8"/><circle cx="4" cy="10" r="2.3" fill="#2a4a9a"/><path d="M2 3 H7" stroke="#e8a020" stroke-width="1.5"/></svg>
<div class="a" style="left:274px;top:370px;width:61px;height:16px;background:linear-gradient(90deg,#dadada 0,#dadada 35px,#f8f8f8 35px);border:1px solid #c6c6c6;border-radius:3px 0 0 3px"></div>
<div class="t" style="left:278px;top:373.5px;font-size:8px;color:#111">Angle</div>
<div class="t" style="left:290px;top:373.9px;font-size:7.3px;width:39px;text-align:right;color:#111">0.00</div>
<div class="a" style="left:335px;top:370px;width:15px;height:16px;background:#e8e8e8;border:1px solid #c6c6c6;border-left:none"></div>
<div class="a" style="left:338px;top:377px;width:9px;height:2px;background:#b03030"></div>
<div class="a" style="left:349px;top:370px;width:14px;height:16px;background:#f0f0f0;border:1px solid #c6c6c6;border-radius:0 3px 3px 0"></div>
<svg class="a" style="left:351px;top:373px;" width="10" height="10" viewBox="0 0 10 10"><path d="M5 0 V10 M0 5 H10" stroke="#111" stroke-width="1.3"/></svg>
<svg class="a" style="left:365px;top:372px;" width="13" height="13" viewBox="0 0 13 13"><path d="M4 3 A5 5 0 1 1 5 12" fill="none" stroke="#e8a020" stroke-width="1.8"/><circle cx="4" cy="10" r="2.3" fill="#2a4a9a"/><path d="M2 3 H7" stroke="#e8a020" stroke-width="1.5"/></svg>
<div class="a" style="left:274px;top:390px;width:61px;height:16px;background:linear-gradient(90deg,#dadada 0,#dadada 16px,#f8f8f8 16px);border:1px solid #c6c6c6;border-radius:3px 0 0 3px"></div>
<div class="t" style="left:278px;top:393.5px;font-size:8px;color:#111">Spacing</div>
<div class="t" style="left:290px;top:393.9px;font-size:7.3px;width:39px;text-align:right;color:#111">10.0</div>
<div class="a" style="left:335px;top:390px;width:15px;height:16px;background:#e8e8e8;border:1px solid #c6c6c6;border-left:none"></div>
<div class="a" style="left:338px;top:397px;width:9px;height:2px;background:#b03030"></div>
<div class="a" style="left:349px;top:390px;width:14px;height:16px;background:#f0f0f0;border:1px solid #c6c6c6;border-radius:0 3px 3px 0"></div>
<svg class="a" style="left:351px;top:393px;" width="10" height="10" viewBox="0 0 10 10"><path d="M5 0 V10 M0 5 H10" stroke="#111" stroke-width="1.3"/></svg>
<svg class="a" style="left:365px;top:392px;" width="13" height="13" viewBox="0 0 13 13"><path d="M4 3 A5 5 0 1 1 5 12" fill="none" stroke="#e8a020" stroke-width="1.8"/><circle cx="4" cy="10" r="2.3" fill="#2a4a9a"/><path d="M2 3 H7" stroke="#e8a020" stroke-width="1.5"/></svg>
<div class="a" style="left:274px;top:410px;width:61px;height:16px;background:linear-gradient(90deg,#dadada 0,#dadada 35px,#f8f8f8 35px);border:1px solid #c6c6c6;border-radius:3px 0 0 3px"></div>
<div class="t" style="left:278px;top:413.5px;font-size:8px;color:#111">Hardn...</div>
<div class="t" style="left:290px;top:413.9px;font-size:7.3px;width:39px;text-align:right;color:#111">50.0</div>
<div class="a" style="left:335px;top:410px;width:15px;height:16px;background:#e8e8e8;border:1px solid #c6c6c6;border-left:none"></div>
<div class="a" style="left:338px;top:417px;width:9px;height:2px;background:#b03030"></div>
<div class="a" style="left:349px;top:410px;width:14px;height:16px;background:#f0f0f0;border:1px solid #c6c6c6;border-radius:0 3px 3px 0"></div>
<svg class="a" style="left:351px;top:413px;" width="10" height="10" viewBox="0 0 10 10"><path d="M5 0 V10 M0 5 H10" stroke="#111" stroke-width="1.3"/></svg>
<svg class="a" style="left:365px;top:412px;" width="13" height="13" viewBox="0 0 13 13"><path d="M4 3 A5 5 0 1 1 5 12" fill="none" stroke="#e8a020" stroke-width="1.8"/><circle cx="4" cy="10" r="2.3" fill="#2a4a9a"/><path d="M2 3 H7" stroke="#e8a020" stroke-width="1.5"/></svg>
<div class="a" style="left:274px;top:430px;width:61px;height:16px;background:linear-gradient(90deg,#dadada 0,#dadada 35px,#f8f8f8 35px);border:1px solid #c6c6c6;border-radius:3px 0 0 3px"></div>
<div class="t" style="left:278px;top:433.5px;font-size:8px;color:#111">Force</div>
<div class="t" style="left:290px;top:433.9px;font-size:7.3px;width:39px;text-align:right;color:#111">50.0</div>
<div class="a" style="left:335px;top:430px;width:15px;height:16px;background:#e8e8e8;border:1px solid #c6c6c6;border-left:none"></div>
<div class="a" style="left:338px;top:437px;width:9px;height:2px;background:#b03030"></div>
<div class="a" style="left:349px;top:430px;width:14px;height:16px;background:#f0f0f0;border:1px solid #c6c6c6;border-radius:0 3px 3px 0"></div>
<svg class="a" style="left:351px;top:433px;" width="10" height="10" viewBox="0 0 10 10"><path d="M5 0 V10 M0 5 H10" stroke="#111" stroke-width="1.3"/></svg>
<svg class="a" style="left:365px;top:432px;" width="13" height="13" viewBox="0 0 13 13"><path d="M4 3 A5 5 0 1 1 5 12" fill="none" stroke="#e8a020" stroke-width="1.8"/><circle cx="4" cy="10" r="2.3" fill="#2a4a9a"/><path d="M2 3 H7" stroke="#e8a020" stroke-width="1.5"/></svg>
<div class="a" style="left:277px;top:451px;width:10px;height:10px;background:#f8f8f8;border:1px solid #bbb;border-radius:2px"></div>
<svg class="a" style="left:278px;top:452px;" width="9" height="8" viewBox="0 0 9 8"><path d="M1 4 L3.5 6.5 L8 1" fill="none" stroke="#111" stroke-width="1.8"/></svg>
<div class="t" style="left:290px;top:452.4px;font-size:7.2px;font-weight:bold;color:#111">Enable dynamics</div>
<div class="a" style="left:283px;top:466px;width:24px;height:24px;background:#fff;border:1px solid #222;border-right-color:#aaa;border-bottom-color:#aaa"></div>
<svg class="a" style="left:285px;top:468px;" width="20" height="20" viewBox="0 0 20 20"><circle cx="4" cy="4" r="2" fill="#000"/><circle cx="9" cy="4" r="2" fill="#000"/><circle cx="4" cy="9" r="2" fill="#000"/><path d="M8 17 Q6 11 11 9 Q15 8 16 11 L17 8 L18 17 Z" fill="#000"/></svg>
<div class="t" style="left:310px;top:466.7px;font-size:7.6px;color:#1a2a4a">Dynamics</div>
<div class="a" style="left:310px;top:476px;width:66px;height:14px;background:#f6f6f6;border:1px solid #d0d0d0;border-radius:3px"></div>
<div class="t" style="left:317px;top:479.9px;font-size:7.1px;color:#111">Pressure Size</div>
<div class="t" style="left:282px;top:494.9px;font-size:7.3px;font-weight:bold;color:#111">Fade Options</div>
<div class="a" style="left:290px;top:505px;width:42px;height:16px;background:linear-gradient(90deg,#dadada 0,#dadada 10px,#f8f8f8 10px);border:1px solid #c6c6c6;border-radius:3px 0 0 3px"></div>
<div class="t" style="left:294px;top:509.0px;font-size:8px;color:#111">F</div>
<div class="t" style="left:300px;top:508.5px;font-size:9px;width:29px;text-align:right;color:#111">100</div>
<div class="a" style="left:332px;top:505px;width:16px;height:16px;background:#e8e8e8;border:1px solid #c6c6c6;border-left:none"></div>
<div class="a" style="left:336px;top:512px;width:9px;height:2px;background:#b03030"></div>
<div class="a" style="left:348px;top:505px;width:14px;height:16px;background:#f0f0f0;border:1px solid #c6c6c6"></div>
<svg class="a" style="left:350px;top:508px;" width="10" height="10" viewBox="0 0 10 10"><path d="M5 0 V10 M0 5 H10" stroke="#111" stroke-width="1.3"/></svg>
<div class="a" style="left:364px;top:505px;width:24px;height:16px;background:#e4e4e4;border:1px solid #c6c6c6;border-radius:3px"></div>
<div class="t" style="left:367px;top:510.0px;font-size:8px;color:#111">px</div>
<svg class="a" style="left:379px;top:511px;" width="7" height="5" viewBox="0 0 7 5"><path d="M.7 .7 L3.5 3.5 L6.3 .7" fill="none" stroke="#111" stroke-width="1.3"/></svg>
<div class="a" style="left:275px;top:517px;width:110px;height:5px;background:#595959;border-radius:3px"></div>
<div class="a" style="left:402px;top:98px;width:508px;height:27px;background:linear-gradient(#ebebeb,#e2e2e2)"></div>
<div class="a" style="left:402px;top:124px;width:508px;height:1px;background:#b5b5b5"></div>
<div class="a" style="left:402px;top:98px;width:62px;height:26px;background:#f4f4f4;border-right:1px solid #d0d0d0"></div>
<div class="a" style="left:404px;top:122px;width:60px;height:2px;background:#a9a9a9"></div>
<svg class="a" style="left:408px;top:101px;" width="32" height="23" viewBox="0 0 32 23"><rect width="32" height="23" fill="#58b828"/><rect x="0" y="0" width="14" height="23" fill="#78c830"/><circle cx="6" cy="5" r="3" fill="#b8c048" opacity=".8"/><circle cx="12" cy="11" r="3" fill="#c0b050" opacity=".7"/><circle cx="24" cy="3" r="3" fill="#a0a040" opacity=".7"/><path d="M14 18 L18 6 L27 3 L29 10 L25 19 Z" fill="#40d0c8"/><path d="M17 14 L24 8 M19 17 L27 11" stroke="#60a040" stroke-width="1.5"/><path d="M2 20 Q12 12 22 22" stroke="#a8e840" stroke-width="2.2" fill="none"/><path d="M26 14 L31 23 L24 23 Z" fill="#30a0c0"/></svg>
<div class="a" style="left:446px;top:107px;width:11px;height:11px;border:1.3px solid #111;border-radius:2px;background:#fafafa"></div>
<svg class="a" style="left:448px;top:109px;" width="7" height="7" viewBox="0 0 7 7"><path d="M.5 .5 L6.5 6.5 M6.5 .5 L.5 6.5" stroke="#111" stroke-width="1.2"/><rect x="2" y="2" width="3" height="3" fill="none" stroke="#111" stroke-width=".6"/></svg>
<div class="a" style="left:402px;top:125px;width:500px;height:13px;background:#ebebeb;border-top:1px solid #9a9a9a"></div>
<svg class="a" style="left:813px;top:126px;" width="89" height="12" viewBox="0 0 89 12"><g stroke="#222"><line x1="8.5" y1="7" x2="8.5" y2="10" stroke="#999"/><line x1="19.5" y1="5" x2="19.5" y2="10"/><line x1="30.5" y1="7" x2="30.5" y2="10" stroke="#999"/><line x1="41.5" y1="5" x2="41.5" y2="10"/><line x1="52.5" y1="7" x2="52.5" y2="10" stroke="#999"/><line x1="64.5" y1="0" x2="64.5" y2="12"/></g></svg>
<div class="t" style="left:879px;top:127.5px;font-size:8px;color:#111;letter-spacing:-.6px">1000</div>
<div class="a" style="left:897px;top:127px;width:11px;height:11px;background:#5a6a80;border:1px solid #333"></div>
<div class="a" style="left:899px;top:129px;width:7px;height:7px;background:#4a8ae0;border-radius:50%;border:1px solid #cde"></div>
<div class="a" style="left:402px;top:138px;width:508px;height:373px;background:linear-gradient(180deg,rgba(0,0,0,0) 91%,rgba(0,0,0,.07) 94%,rgba(0,0,0,0) 100%),linear-gradient(90deg,#dedede,#e6e6e6 70%,#e9e9e9)"></div>
<div class="a" style="left:402px;top:138px;width:12px;height:373px;background:#ebebeb;border-right:1px solid #bbb"></div>
<div class="t" style="left:403.5px;top:493.5px;font-size:7px;color:#000">5</div>
<div class="t" style="left:403.5px;top:500.5px;font-size:7px;color:#000">0</div>
<div class="a" style="left:408px;top:506px;width:5px;height:1px;background:#333"></div>
<div class="a" style="left:403px;top:489px;width:1px;height:3px;background:#333"></div>
<div class="a" style="left:410px;top:487px;width:2px;height:1px;background:#888"></div>
<svg class="a" style="left:404px;top:509px;" width="10" height="10" viewBox="0 0 10 10"><rect x=".7" y=".7" width="8.6" height="8.6" fill="none" stroke="#111" stroke-width="1.4" stroke-dasharray="1.6,1.2"/></svg>
<div class="a" style="left:416px;top:512px;width:482px;height:5px;background:#5a5a5a;border-radius:3px"></div>
<div class="a" style="left:900px;top:143px;width:5px;height:364px;background:#5a5a5a;border-radius:3px"></div>
<svg class="a" style="left:897px;top:509px;" width="11" height="11" viewBox="0 0 11 11"><path d="M5.5 0 V11 M0 5.5 H11 M2 2 L9 9 M9 2 L2 9" stroke="#222" stroke-width="1"/></svg>
<svg class="a" style="left:813px;top:152px;" width="66" height="333" viewBox="0 0 66 333"><defs><linearGradient id="cvv" x1="0" y1="0" x2="0" y2="1"><stop offset="0" stop-color="#60b828"/><stop offset=".045" stop-color="#78b020"/><stop offset=".065" stop-color="#a08420"/><stop offset=".1" stop-color="#988c20"/><stop offset=".125" stop-color="#78c020"/><stop offset=".2" stop-color="#90c420"/><stop offset=".28" stop-color="#50b830"/><stop offset=".36" stop-color="#8aa420"/><stop offset=".42" stop-color="#b0d018"/><stop offset=".5" stop-color="#a8d818"/><stop offset="1" stop-color="#40c820"/></linearGradient><linearGradient id="cvh" x1="0" y1="0" x2="1" y2="0"><stop offset="0" stop-color="#30b030" stop-opacity=".5"/><stop offset=".6" stop-color="#30b030" stop-opacity="0"/></linearGradient><linearGradient id="lf" x1="0" y1="0" x2=".3" y2="1"><stop offset="0" stop-color="#b8f098"/><stop offset=".4" stop-color="#88eab8"/><stop offset=".75" stop-color="#58e080"/><stop offset="1" stop-color="#30e040"/></linearGradient><linearGradient id="rt" x1="0" y1="0" x2="0" y2="1"><stop offset="0" stop-color="#30d020" stop-opacity="0"/><stop offset=".3" stop-color="#28d020"/><stop offset=".65" stop-color="#18c018"/><stop offset=".8" stop-color="#107a18"/><stop offset="1" stop-color="#085810"/></linearGradient></defs><rect width="66" height="333" fill="url(#cvv)"/><rect width="66" height="333" fill="url(#cvh)"/><path d="M20 150 L66 140 L66 333 L0 333 Z" fill="url(#rt)"/><path d="M0 166 Q25 172 42 193 Q56 215 55 243 Q52 272 32 296 Q18 315 5 333 L0 333 Z" fill="url(#lf)"/><circle cx="27" cy="288" r="17" fill="#f0f0c0" opacity=".3" stroke="#f0e8c0" stroke-opacity=".6"/><path d="M0 166 Q25 172 42 193 Q56 215 55 243 Q52 272 32 296 Q18 315 5 333" fill="none" stroke="#3a2a10" stroke-width="1.1"/><path d="M47 200 Q59 225 57 250 Q52 280 35 303 Q22 320 10 333" fill="none" stroke="#20e0f0" stroke-width="2.5"/><path d="M50 205 Q62 230 60 252 Q55 283 38 305 Q25 322 13 333" fill="none" stroke="#1a2a20" stroke-width="1"/><path d="M8 186 L22 172 M12 192 L26 178" stroke="#9a4020" stroke-width="1.3"/><ellipse cx="44" cy="214" rx="3" ry="2" fill="none" stroke="#222"/><ellipse cx="26" cy="268" rx="3" ry="1.5" fill="none" stroke="#222"/><circle cx="12" cy="238" r="1" fill="#222"/><path d="M0 66 Q4 76 0 86" fill="#40c8b0" stroke="#222"/><rect x=".5" y=".5" width="65" height="332" fill="none" stroke="#222" stroke-dasharray="2,2"/><line x1="65.5" y1="0" x2="65.5" y2="333" stroke="#ee0" stroke-dasharray="2,2" stroke-dashoffset="2"/></svg>
<div class="a" style="left:906px;top:98px;width:4px;height:424px;background:#e6e6e6"></div>
<div class="a" style="left:910px;top:98px;width:1px;height:424px;background:#cfcfcf"></div>
<div class="a" style="left:913px;top:98px;width:1px;height:424px;background:#d6d6d6"></div>
<svg class="a" style="left:908px;top:316px;" width="4" height="10" viewBox="0 0 4 10"><circle cx="2" cy="1.5" r="1.2" fill="#222"/><circle cx="2" cy="5" r="1.2" fill="#222"/><circle cx="2" cy="8.5" r="1.2" fill="#222"/></svg>
<div class="a" style="left:914px;top:98px;width:130px;height:23px;background:#ebebeb"></div>
<div class="a" style="left:917px;top:99px;width:22px;height:22px;background:#e8e8e8;border:1px solid #d6d6d6"></div>
<div class="a" style="left:940px;top:99px;width:28px;height:22px;background:#e8e8e8;border:1px solid #d6d6d6"></div>
<div class="a" style="left:969px;top:99px;width:22px;height:22px;background:#f8f8f8;border:1px solid #d6d6d6;border-bottom:2px solid #aaa"></div>
<svg class="a" style="left:922px;top:104px;" width="12" height="12" viewBox="0 0 12 12"><path d="M2 3 H11 L10 6 H1 Z M2 6 H11 L10 9 H1 Z M2 9 H11 L10 12 H1 Z" fill="#f0f0f0" stroke="#777" stroke-width=".8"/></svg>
<svg class="a" style="left:950px;top:105px;" width="8" height="10" viewBox="0 0 8 10"><rect width="8" height="3.4" fill="#e02020"/><rect y="3.3" width="8" height="3.4" fill="#30c030"/><rect y="6.6" width="8" height="3.4" fill="#2050c0"/></svg>
<svg class="a" style="left:974px;top:105px;" width="13" height="10" viewBox="0 0 13 10"><path d="M1 2 H3 M10 2 H12" stroke="#888"/><path d="M2 9 Q6.5 1 11 9" fill="none" stroke="#1a3a80" stroke-width="2"/></svg>
<div class="a" style="left:1037px;top:105px;width:10px;height:9px;border:1.3px solid #222;border-radius:2px"></div>
<div class="a" style="left:914px;top:121px;width:130px;height:1px;background:#bbb"></div>
<div class="a" style="left:915px;top:123px;width:130px;height:26px;background:#e6e6e6;border:1px solid #9a9a9a"></div>
<div class="a" style="left:935px;top:123px;width:1px;height:26px;background:#9a9a9a"></div>
<div class="a" style="left:955px;top:123px;width:1px;height:26px;background:#9a9a9a"></div>
<svg class="a" style="left:919px;top:131px;" width="12" height="8" viewBox="0 0 12 8"><ellipse cx="6" cy="4" rx="5.5" ry="3" fill="#fff" stroke="#1a2a60" stroke-width="1.3"/><circle cx="6" cy="4" r="2" fill="#2a4aa0"/></svg>
<svg class="a" style="left:940px;top:128px;" width="10" height="14" viewBox="0 0 10 14"><path d="M2 6 V4 A3 3 0 0 1 8 4 V6" fill="none" stroke="#222" stroke-width="1.3"/><rect x="0" y="6" width="10" height="8" fill="#e8b050"/></svg>
<div class="a" style="left:915px;top:149px;width:129px;height:137px;background:#f8f8f8;border-left:1px solid #ddd"></div>
<div class="a" style="left:915px;top:286px;width:129px;height:1px;background:#aaa"></div>
<div class="a" style="left:914px;top:287px;width:130px;height:20px;background:#ececec"></div>
<svg class="a" style="left:917px;top:290px;" width="12" height="13" viewBox="0 0 12 13"><path d="M2 4 H8 L11 7 V12 H2 Z" fill="#fafafa" stroke="#555" stroke-width=".8"/><path d="M3 0 V4 M1 2 H5" stroke="#222"/></svg>
<svg class="a" style="left:935px;top:292px;" width="11" height="7" viewBox="0 0 11 7"><path d="M1 6 L5.5 1.5 L10 6" fill="none" stroke="#e0a060" stroke-width="2"/></svg>
<svg class="a" style="left:951px;top:292px;" width="11" height="7" viewBox="0 0 11 7"><path d="M1 1 L5.5 5.5 L10 1" fill="none" stroke="#e0a060" stroke-width="2"/></svg>
<svg class="a" style="left:968px;top:291px;" width="11" height="11" viewBox="0 0 11 11"><rect x="0" y="0" width="7" height="7" fill="#a0c8f0" stroke="#3a70b0"/><rect x="4" y="4" width="7" height="7" fill="#5a90d0" stroke="#3a70b0"/></svg>
<svg class="a" style="left:986px;top:291px;" width="10" height="10" viewBox="0 0 10 10"><rect x=".5" y=".5" width="9" height="9" fill="#f0a0a0" stroke="#d03030"/><circle cx="5" cy="5" r="2.5" fill="#e04040"/></svg>
<svg class="a" style="left:1002px;top:291px;" width="11" height="11" viewBox="0 0 11 11"><rect x=".5" y="3" width="8" height="7.5" fill="#f0c0c0" stroke="#888"/><rect x="2" y="5" width="4" height="4" fill="#d03030"/><path d="M6 4 L10 0" stroke="#555"/></svg>
<svg class="a" style="left:1018px;top:291px;" width="10" height="10" viewBox="0 0 10 10"><circle cx="2" cy="8" r="1.3" fill="#888"/><circle cx="5" cy="4" r="1.3" fill="#888"/><circle cx="8" cy="2" r="1.3" fill="#888"/><circle cx="8" cy="7" r="1" fill="#888"/></svg>
<svg class="a" style="left:1035px;top:291px;" width="9" height="10" viewBox="0 0 9 10"><path d="M1 1 L9 9 M9 1 L1 9" stroke="#e03030" stroke-width="2"/></svg>
<div class="a" style="left:914px;top:307px;width:130px;height:1px;background:#c4c4c4"></div>
<svg class="a" style="left:977px;top:308px;" width="10" height="3" viewBox="0 0 10 3"><circle cx="1.5" cy="1.5" r="1" fill="#222"/><circle cx="5" cy="1.5" r="1" fill="#222"/><circle cx="8.5" cy="1.5" r="1" fill="#222"/></svg>
<div class="a" style="left:914px;top:308px;width:130px;height:27px;background:#ebebeb"></div>
<div class="a" style="left:917px;top:311px;width:22px;height:22px;background:#f8f8f8;border:1px solid #d6d6d6;border-bottom:2px solid #aaa"></div>
<div class="a" style="left:943px;top:311px;width:22px;height:22px;background:#e8e8e8;border:1px solid #d6d6d6"></div>
<div class="a" style="left:968px;top:311px;width:22px;height:22px;background:#e8e8e8;border:1px solid #d6d6d6"></div>
<svg class="a" style="left:922px;top:316px;" width="12" height="12" viewBox="0 0 12 12"><path d="M11 1 L5 8" stroke="#9a5a30" stroke-width="2"/><path d="M5 8 Q3 8 3 10 Q3 11 1 11.5 Q5 12 6 9 Z" fill="#222"/></svg>
<svg class="a" style="left:947px;top:315px;" width="14" height="13" viewBox="0 0 14 13"><rect x="1" y="1" width="12" height="11" fill="#fff"/><circle cx="7" cy="6.5" r="3" fill="#e01010"/><path d="M1 1 H4 M10 1 H13 M1 12 H4 M10 12 H13 M1 1 V4 M13 1 V4 M1 9 V12 M13 9 V12" stroke="#e01010" stroke-width="2"/></svg>
<div class="a" style="left:972px;top:315px;width:13px;height:13px;background:linear-gradient(90deg,#000,#fff);border:1px solid #222"></div>
<div class="a" style="left:1036px;top:316px;width:10px;height:9px;border:1.3px solid #222;border-radius:2px"></div>
<div class="a" style="left:915px;top:336px;width:130px;height:15px;background:#f8f8f8;border:1px solid #d2d2d2;border-radius:4px 0 0 4px"></div>
<div class="t" style="left:921px;top:339.5px;font-size:8px;color:#555;font-style:italic">filter</div>
<svg class="a" style="left:1028px;top:340px;" width="11" height="7" viewBox="0 0 11 7"><path d="M1 1 L5.5 5.5 L10 1" fill="none" stroke="#d05020" stroke-width="1.8"/></svg>
<div class="t" style="left:915px;top:353.7px;font-size:7.6px;color:#000;font-style:italic">2. Hardness 050 (51 × 51)</div>
<div class="a" style="left:915px;top:365px;width:129px;height:123px;background:#ececec"></div>
<div class="a" style="left:916px;top:366px;width:113px;height:122px;background:#fafafa"></div>
<svg class="a" style="left:916px;top:366px;" width="113" height="122" viewBox="0 0 113 122"><defs><radialGradient id="bs"><stop offset="0" stop-color="#000"/><stop offset=".3" stop-color="#222"/><stop offset="1" stop-color="#fff" stop-opacity="0"/></radialGradient><radialGradient id="bh"><stop offset="0" stop-color="#000"/><stop offset=".5" stop-color="#111"/><stop offset="1" stop-color="#fff" stop-opacity="0"/></radialGradient></defs><g stroke="#eee" stroke-width=".6"><line x1="22.5" y1="0" x2="22.5" y2="122"/><line x1="45" y1="0" x2="45" y2="122"/><line x1="67.5" y1="0" x2="67.5" y2="122"/><line x1="90" y1="0" x2="90" y2="122"/><line x1="0" y1="22.7" x2="113" y2="22.7"/><line x1="0" y1="45.4" x2="113" y2="45.4"/><line x1="0" y1="68.1" x2="113" y2="68.1"/><line x1="0" y1="90.8" x2="113" y2="90.8"/></g><circle cx="56" cy="11" r=".9" fill="#000"/><rect x="70" y="8" width="20" height="6" fill="#000"/><ellipse cx="102" cy="11" rx="8" ry="3.5" fill="#000"/><line x1="1" y1="34" x2="22" y2="34" stroke="#333" stroke-width="1"/><circle cx="33.7" cy="34" r="8" fill="url(#bs)"/><rect x="45.5" y="23.2" width="22" height="22" fill="#f2f2f2"/><circle cx="56" cy="34" r="9" fill="url(#bs)"/><circle cx="79" cy="34" r="9.5" fill="url(#bh)"/><circle cx="101" cy="34" r="10.5" fill="#000"/><path d="M11 47 L13.5 53 L20 53 L15 57 L17 64 L11 60 L5 64 L7 57 L2 53 L8.5 53 Z" fill="#000"/><circle cx="31.2" cy="51.1" r="0.99" fill="#000"/><circle cx="27.7" cy="56.5" r="0.73" fill="#000"/><circle cx="27.5" cy="56.1" r="0.43" fill="#000"/><circle cx="32.8" cy="50.0" r="0.48" fill="#000"/><circle cx="32.6" cy="60.6" r="0.51" fill="#000"/><circle cx="29.8" cy="57.8" r="1.25" fill="#000"/><circle cx="34.8" cy="54.6" r="1.28" fill="#000"/><circle cx="30.8" cy="51.0" r="0.51" fill="#000"/><circle cx="31.0" cy="60.4" r="0.56" fill="#000"/><circle cx="34.8" cy="57.9" r="0.74" fill="#000"/><circle cx="34.4" cy="49.9" r="0.45" fill="#000"/><circle cx="29.6" cy="58.5" r="0.78" fill="#000"/><circle cx="31.1" cy="57.2" r="0.81" fill="#000"/><circle cx="30.9" cy="60.1" r="1.03" fill="#000"/><circle cx="30.1" cy="57.0" r="0.87" fill="#000"/><circle cx="39.0" cy="59.2" r="0.66" fill="#000"/><circle cx="32.6" cy="59.6" r="0.54" fill="#000"/><circle cx="33.5" cy="49.5" r="1.00" fill="#000"/><circle cx="37.4" cy="57.0" r="1.19" fill="#000"/><circle cx="31.1" cy="58.7" r="0.93" fill="#000"/><circle cx="34.8" cy="55.4" r="1.16" fill="#000"/><circle cx="39.9" cy="55.6" r="1.00" fill="#000"/><circle cx="27.5" cy="58.8" r="0.98" fill="#000"/><circle cx="30.7" cy="54.4" r="1.00" fill="#000"/><circle cx="27.0" cy="55.5" r="0.55" fill="#000"/><circle cx="37.5" cy="50.8" r="0.62" fill="#000"/><circle cx="32.2" cy="61.2" r="0.47" fill="#000"/><circle cx="33.0" cy="56.7" r="1.20" fill="#000"/><circle cx="38.2" cy="61.1" r="0.65" fill="#000"/><circle cx="32.5" cy="54.0" r="1.20" fill="#000"/><circle cx="29.2" cy="52.2" r="0.61" fill="#000"/><circle cx="33.5" cy="57.2" r="0.64" fill="#000"/><circle cx="31.9" cy="56.9" r="1.26" fill="#000"/><circle cx="36.4" cy="56.2" r="0.96" fill="#000"/><circle cx="36.2" cy="49.8" r="1.21" fill="#000"/><circle cx="37.6" cy="61.2" r="1.12" fill="#000"/><circle cx="32.2" cy="54.6" r="0.49" fill="#000"/><circle cx="35.6" cy="49.9" r="0.46" fill="#000"/><circle cx="29.6" cy="51.3" r="0.71" fill="#000"/><circle cx="31.8" cy="49.4" r="1.19" fill="#000"/><circle cx="57.6" cy="51.1" r="0.45" fill="#000"/><circle cx="53.9" cy="54.1" r="0.37" fill="#000"/><circle cx="55.5" cy="55.8" r="0.35" fill="#000"/><circle cx="50.4" cy="53.8" r="0.46" fill="#000"/><circle cx="60.6" cy="51.3" r="0.31" fill="#000"/><circle cx="62.3" cy="56.4" r="0.39" fill="#000"/><circle cx="56.6" cy="49.4" r="0.62" fill="#000"/><circle cx="58.7" cy="52.7" r="0.52" fill="#000"/><circle cx="51.3" cy="59.8" r="0.62" fill="#000"/><circle cx="59.9" cy="53.6" r="0.43" fill="#000"/><circle cx="60.9" cy="60.3" r="0.79" fill="#000"/><circle cx="59.4" cy="52.2" r="0.61" fill="#000"/><circle cx="54.0" cy="49.4" r="0.32" fill="#000"/><circle cx="52.9" cy="52.6" r="0.72" fill="#000"/><circle cx="62.4" cy="55.3" r="0.86" fill="#000"/><circle cx="54.1" cy="52.1" r="0.44" fill="#000"/><circle cx="51.8" cy="51.9" r="0.67" fill="#000"/><circle cx="55.7" cy="58.1" r="0.78" fill="#000"/><circle cx="50.2" cy="58.2" r="0.85" fill="#000"/><circle cx="60.0" cy="59.5" r="0.59" fill="#000"/><circle cx="51.5" cy="60.0" r="0.50" fill="#000"/><circle cx="54.5" cy="54.6" r="0.87" fill="#000"/><circle cx="59.1" cy="51.4" r="0.38" fill="#000"/><circle cx="60.3" cy="51.0" r="0.80" fill="#000"/><circle cx="53.9" cy="56.7" r="0.38" fill="#000"/><circle cx="58.1" cy="56.4" r="0.86" fill="#000"/><circle cx="55.1" cy="61.2" r="0.80" fill="#000"/><circle cx="52.0" cy="52.5" r="0.48" fill="#000"/><circle cx="52.4" cy="57.2" r="0.46" fill="#000"/><circle cx="54.9" cy="50.8" r="0.85" fill="#000"/><circle cx="77.0" cy="55.4" r="0.65" fill="#000"/><circle cx="84.7" cy="54.9" r="0.85" fill="#000"/><circle cx="79.0" cy="56.4" r="0.61" fill="#000"/><circle cx="72.3" cy="55.2" r="0.41" fill="#000"/><circle cx="74.4" cy="55.6" r="0.74" fill="#000"/><circle cx="79.8" cy="53.6" r="0.61" fill="#000"/><circle cx="79.8" cy="60.0" r="0.36" fill="#000"/><circle cx="79.8" cy="52.5" r="0.47" fill="#000"/><circle cx="82.8" cy="56.1" r="0.64" fill="#000"/><circle cx="82.6" cy="61.8" r="0.57" fill="#000"/><circle cx="80.6" cy="56.1" r="0.61" fill="#000"/><circle cx="81.7" cy="55.3" r="0.62" fill="#000"/><circle cx="78.7" cy="62.2" r="0.72" fill="#000"/><circle cx="75.6" cy="56.8" r="0.87" fill="#000"/><circle cx="83.8" cy="50.9" r="0.37" fill="#000"/><circle cx="78.2" cy="50.0" r="0.44" fill="#000"/><circle cx="73.0" cy="58.4" r="0.77" fill="#000"/><circle cx="82.0" cy="58.2" r="0.39" fill="#000"/><circle cx="77.6" cy="55.8" r="0.89" fill="#000"/><circle cx="83.7" cy="51.3" r="0.56" fill="#000"/><circle cx="79.2" cy="53.7" r="0.42" fill="#000"/><circle cx="76.5" cy="59.1" r="0.31" fill="#000"/><circle cx="79.8" cy="55.2" r="0.31" fill="#000"/><circle cx="76.6" cy="57.7" r="0.61" fill="#000"/><circle cx="73.5" cy="52.7" r="0.32" fill="#000"/><circle cx="82.9" cy="52.8" r="0.38" fill="#000"/><circle cx="77.9" cy="61.8" r="0.79" fill="#000"/><circle cx="75.6" cy="51.1" r="0.85" fill="#000"/><circle cx="80.0" cy="58.8" r="0.35" fill="#000"/><circle cx="72.8" cy="58.6" r="0.56" fill="#000"/><circle cx="102.9" cy="60.2" r="0.34" fill="#333"/><circle cx="106.1" cy="55.4" r="0.47" fill="#333"/><circle cx="101.7" cy="62.0" r="0.43" fill="#333"/><circle cx="95.8" cy="56.4" r="0.42" fill="#333"/><circle cx="98.4" cy="53.3" r="0.68" fill="#333"/><circle cx="98.1" cy="56.0" r="0.39" fill="#333"/><circle cx="104.3" cy="56.7" r="0.39" fill="#333"/><circle cx="100.6" cy="62.1" r="0.35" fill="#333"/><circle cx="105.5" cy="55.1" r="0.55" fill="#333"/><circle cx="105.7" cy="54.5" r="0.55" fill="#333"/><circle cx="98.8" cy="60.7" r="0.65" fill="#333"/><circle cx="102.9" cy="54.7" r="0.47" fill="#333"/><circle cx="95.0" cy="59.4" r="0.43" fill="#333"/><circle cx="103.4" cy="52.9" r="0.42" fill="#333"/><circle cx="98.1" cy="55.4" r="0.38" fill="#333"/><circle cx="100.2" cy="52.7" r="0.78" fill="#333"/><circle cx="107.6" cy="56.7" r="0.42" fill="#333"/><circle cx="99.3" cy="55.6" r="0.55" fill="#333"/><circle cx="96.8" cy="56.1" r="0.30" fill="#333"/><circle cx="97.7" cy="50.3" r="0.50" fill="#333"/><circle cx="98.3" cy="52.3" r="0.59" fill="#333"/><circle cx="101.4" cy="59.5" r="0.63" fill="#333"/><circle cx="104.0" cy="61.3" r="0.49" fill="#333"/><circle cx="96.1" cy="59.1" r="0.62" fill="#333"/><circle cx="106.5" cy="57.8" r="0.67" fill="#333"/><circle cx="105.4" cy="51.0" r="0.56" fill="#333"/><circle cx="101.1" cy="60.7" r="0.70" fill="#333"/><circle cx="105.6" cy="57.2" r="0.75" fill="#333"/><circle cx="103.6" cy="58.7" r="0.41" fill="#333"/><circle cx="99.0" cy="50.5" r="0.72" fill="#333"/><circle cx="101.8" cy="57.8" r="0.61" fill="#333"/><circle cx="103.5" cy="55.9" r="0.30" fill="#333"/><circle cx="105.2" cy="59.5" r="0.55" fill="#333"/><circle cx="101.5" cy="58.2" r="0.33" fill="#333"/><circle cx="104.3" cy="52.5" r="0.34" fill="#333"/><circle cx="97.7" cy="59.2" r="0.40" fill="#333"/><circle cx="100.9" cy="54.4" r="0.54" fill="#333"/><circle cx="103.6" cy="59.7" r="0.61" fill="#333"/><circle cx="103.0" cy="50.1" r="0.37" fill="#333"/><circle cx="97.6" cy="59.4" r="0.45" fill="#333"/><circle cx="101.9" cy="49.2" r="0.33" fill="#333"/><circle cx="97.8" cy="58.4" r="0.65" fill="#333"/><circle cx="103.5" cy="53.1" r="0.56" fill="#333"/><circle cx="100.5" cy="55.5" r="0.36" fill="#333"/><circle cx="106.5" cy="51.8" r="0.79" fill="#333"/><circle cx="10.4" cy="83.5" r="1.07" fill="#000"/><circle cx="10.3" cy="75.8" r="0.47" fill="#000"/><circle cx="12.1" cy="74.0" r="0.72" fill="#000"/><circle cx="15.5" cy="79.1" r="1.01" fill="#000"/><circle cx="13.8" cy="75.2" r="1.02" fill="#000"/><circle cx="10.8" cy="72.3" r="0.30" fill="#000"/><circle cx="10.9" cy="78.3" r="0.54" fill="#000"/><circle cx="6.0" cy="76.8" r="0.55" fill="#000"/><circle cx="14.5" cy="83.7" r="0.40" fill="#000"/><circle cx="17.0" cy="82.0" r="1.02" fill="#000"/><circle cx="8.1" cy="77.2" r="0.61" fill="#000"/><circle cx="9.0" cy="78.0" r="0.52" fill="#000"/><circle cx="15.7" cy="76.0" r="1.05" fill="#000"/><circle cx="7.5" cy="75.7" r="0.71" fill="#000"/><circle cx="6.7" cy="77.2" r="1.06" fill="#000"/><circle cx="16.4" cy="83.4" r="0.80" fill="#000"/><circle cx="11.7" cy="82.1" r="0.34" fill="#000"/><circle cx="14.3" cy="78.3" r="0.90" fill="#000"/><circle cx="13.0" cy="76.0" r="0.34" fill="#000"/><circle cx="10.6" cy="76.8" r="0.54" fill="#000"/><circle cx="7.6" cy="81.2" r="0.54" fill="#000"/><circle cx="11.8" cy="77.5" r="0.43" fill="#000"/><circle cx="6.3" cy="74.9" r="1.02" fill="#000"/><circle cx="11.0" cy="75.1" r="1.03" fill="#000"/><circle cx="18.0" cy="78.3" r="0.41" fill="#000"/><circle cx="8.8" cy="73.3" r="0.49" fill="#000"/><circle cx="7.6" cy="80.0" r="1.01" fill="#000"/><circle cx="14.5" cy="77.8" r="0.63" fill="#000"/><circle cx="11.3" cy="77.3" r="0.57" fill="#000"/><circle cx="4.9" cy="75.9" r="1.07" fill="#000"/><circle cx="5.8" cy="79.0" r="0.80" fill="#000"/><circle cx="16.1" cy="75.0" r="0.52" fill="#000"/><circle cx="7.5" cy="77.6" r="0.66" fill="#000"/><circle cx="16.5" cy="78.6" r="0.77" fill="#000"/><circle cx="7.5" cy="73.5" r="0.42" fill="#000"/><circle cx="11.3" cy="81.5" r="1.05" fill="#000"/><circle cx="14.1" cy="81.1" r="0.91" fill="#000"/><circle cx="10.4" cy="79.7" r="0.33" fill="#000"/><circle cx="15.0" cy="75.3" r="1.04" fill="#000"/><circle cx="13.0" cy="76.3" r="0.40" fill="#000"/><circle cx="7.5" cy="80.9" r="0.86" fill="#000"/><circle cx="11.3" cy="80.2" r="0.61" fill="#000"/><circle cx="7.1" cy="80.4" r="0.31" fill="#000"/><circle cx="8.2" cy="78.4" r="1.07" fill="#000"/><circle cx="13.0" cy="84.4" r="0.68" fill="#000"/><circle cx="7.3" cy="75.5" r="1.07" fill="#000"/><circle cx="13.9" cy="76.3" r="0.32" fill="#000"/><circle cx="11.0" cy="81.4" r="0.64" fill="#000"/><circle cx="7.6" cy="81.3" r="1.04" fill="#000"/><circle cx="8.7" cy="77.9" r="0.85" fill="#000"/><circle cx="6.8" cy="83.2" r="0.89" fill="#000"/><circle cx="11.1" cy="74.9" r="1.08" fill="#000"/><circle cx="8.4" cy="83.5" r="0.48" fill="#000"/><circle cx="7.1" cy="82.6" r="0.54" fill="#000"/><circle cx="17.3" cy="78.9" r="0.45" fill="#000"/><circle cx="7.1" cy="77.8" r="0.83" fill="#000"/><circle cx="9.5" cy="75.0" r="1.08" fill="#000"/><circle cx="4.8" cy="77.5" r="1.02" fill="#000"/><circle cx="16.4" cy="82.3" r="1.10" fill="#000"/><circle cx="17.0" cy="76.6" r="0.45" fill="#000"/><path d="M33 72 L36 78" stroke="#222" stroke-width=".8"/><circle cx="48.5" cy="82.6" r="0.65" fill="#000"/><circle cx="54.0" cy="77.3" r="0.57" fill="#000"/><circle cx="53.6" cy="87.3" r="0.55" fill="#000"/><circle cx="53.7" cy="85.1" r="0.83" fill="#000"/><circle cx="54.9" cy="72.8" r="0.69" fill="#000"/><circle cx="54.0" cy="86.7" r="0.58" fill="#000"/><circle cx="53.8" cy="86.4" r="0.51" fill="#000"/><circle cx="54.6" cy="85.0" r="0.81" fill="#000"/><circle cx="52.1" cy="84.0" r="0.86" fill="#000"/><circle cx="53.4" cy="76.4" r="0.88" fill="#000"/><circle cx="57.9" cy="76.2" r="0.79" fill="#000"/><circle cx="53.1" cy="76.4" r="0.50" fill="#000"/><circle cx="83.1" cy="86.7" r="0.88" fill="#000"/><circle cx="74.7" cy="79.6" r="1.07" fill="#000"/><circle cx="86.3" cy="78.2" r="0.65" fill="#000"/><circle cx="77.9" cy="79.9" r="1.06" fill="#000"/><circle cx="73.9" cy="84.8" r="0.94" fill="#000"/><circle cx="84.2" cy="84.4" r="0.86" fill="#000"/><circle cx="76.2" cy="77.1" r="0.72" fill="#000"/><circle cx="74.2" cy="84.0" r="0.65" fill="#000"/><circle cx="79.8" cy="77.2" r="1.09" fill="#000"/><circle cx="75.2" cy="73.3" r="0.56" fill="#000"/><circle cx="79.0" cy="83.4" r="0.77" fill="#000"/><circle cx="74.7" cy="78.7" r="0.87" fill="#000"/><circle cx="81.8" cy="84.0" r="1.01" fill="#000"/><circle cx="81.6" cy="73.9" r="1.00" fill="#000"/><circle cx="75.7" cy="81.1" r="0.72" fill="#000"/><circle cx="82.8" cy="75.2" r="0.65" fill="#000"/><circle cx="96.9" cy="74.5" r="0.57" fill="#555"/><circle cx="102.3" cy="77.2" r="0.42" fill="#555"/><circle cx="108.9" cy="80.1" r="0.37" fill="#555"/><circle cx="105.9" cy="82.5" r="0.60" fill="#555"/><circle cx="94.6" cy="79.6" r="0.55" fill="#555"/><circle cx="94.9" cy="75.0" r="0.59" fill="#555"/><circle cx="102.3" cy="86.9" r="0.41" fill="#555"/><circle cx="106.9" cy="79.2" r="0.38" fill="#555"/><circle cx="94.7" cy="81.5" r="0.49" fill="#555"/><circle cx="96.5" cy="77.9" r="0.34" fill="#555"/><circle cx="96.3" cy="76.1" r="0.48" fill="#555"/><circle cx="103.4" cy="75.3" r="0.30" fill="#555"/><circle cx="98.2" cy="82.9" r="0.36" fill="#555"/><circle cx="98.0" cy="75.3" r="0.54" fill="#555"/><circle cx="11.8" cy="94.0" r="0.35" fill="#000"/><circle cx="9.3" cy="101.8" r="0.62" fill="#000"/><circle cx="14.1" cy="99.6" r="0.44" fill="#000"/><circle cx="7.9" cy="108.3" r="0.46" fill="#000"/><circle cx="12.1" cy="98.7" r="0.51" fill="#000"/><circle cx="8.8" cy="96.2" r="0.66" fill="#000"/><circle cx="17.4" cy="99.8" r="0.71" fill="#000"/><circle cx="9.5" cy="107.1" r="0.53" fill="#000"/><circle cx="11.8" cy="103.3" r="0.75" fill="#000"/><circle cx="4.4" cy="103.0" r="0.49" fill="#000"/><circle cx="11.1" cy="95.3" r="0.44" fill="#000"/><circle cx="11.3" cy="107.8" r="0.35" fill="#000"/><circle cx="10.8" cy="105.9" r="0.78" fill="#000"/><circle cx="6.2" cy="95.0" r="0.77" fill="#000"/><circle cx="18.6" cy="100.7" r="0.33" fill="#000"/><circle cx="17.8" cy="99.2" r="0.75" fill="#000"/><circle cx="12.9" cy="106.2" r="0.38" fill="#000"/><circle cx="15.6" cy="96.6" r="0.50" fill="#000"/><circle cx="16.5" cy="106.3" r="0.39" fill="#000"/><circle cx="6.5" cy="99.4" r="0.56" fill="#000"/><circle cx="9.1" cy="95.0" r="0.42" fill="#000"/><circle cx="14.6" cy="107.4" r="0.32" fill="#000"/><circle cx="12.0" cy="105.1" r="0.32" fill="#000"/><circle cx="12.6" cy="101.8" r="0.61" fill="#000"/><circle cx="7.9" cy="99.7" r="0.59" fill="#000"/><circle cx="9.8" cy="103.5" r="0.52" fill="#000"/><circle cx="10.0" cy="93.4" r="0.61" fill="#000"/><circle cx="10.8" cy="96.8" r="0.68" fill="#000"/><circle cx="15.5" cy="100.3" r="0.39" fill="#000"/><circle cx="10.6" cy="94.7" r="0.36" fill="#000"/><circle cx="9.9" cy="94.5" r="0.52" fill="#000"/><circle cx="11.2" cy="93.7" r="0.62" fill="#000"/><circle cx="4.3" cy="104.7" r="0.69" fill="#000"/><circle cx="11.2" cy="93.9" r="0.55" fill="#000"/><circle cx="9.0" cy="108.2" r="0.37" fill="#000"/><circle cx="14.7" cy="106.0" r="0.40" fill="#000"/><circle cx="18.7" cy="100.9" r="0.78" fill="#000"/><circle cx="4.0" cy="98.6" r="0.68" fill="#000"/><circle cx="7.4" cy="106.1" r="0.37" fill="#000"/><circle cx="11.0" cy="107.7" r="0.40" fill="#000"/><circle cx="7.2" cy="101.1" r="0.46" fill="#000"/><circle cx="13.9" cy="107.3" r="0.38" fill="#000"/><circle cx="15.6" cy="94.8" r="0.57" fill="#000"/><circle cx="13.2" cy="98.8" r="0.74" fill="#000"/><circle cx="11.9" cy="102.3" r="0.74" fill="#000"/><circle cx="13.1" cy="99.3" r="0.70" fill="#000"/><circle cx="12.2" cy="98.8" r="0.68" fill="#000"/><circle cx="10.1" cy="95.8" r="0.67" fill="#000"/><circle cx="7.1" cy="103.2" r="0.79" fill="#000"/><circle cx="12.4" cy="103.6" r="0.46" fill="#000"/><circle cx="5.4" cy="102.9" r="0.52" fill="#000"/><circle cx="11.2" cy="107.3" r="0.37" fill="#000"/><circle cx="6.6" cy="103.4" r="0.31" fill="#000"/><circle cx="4.7" cy="98.7" r="0.41" fill="#000"/><circle cx="12.3" cy="102.4" r="0.40" fill="#000"/><circle cx="13.0" cy="100.6" r="0.37" fill="#000"/><circle cx="13.2" cy="106.9" r="0.69" fill="#000"/><circle cx="9.4" cy="97.2" r="0.31" fill="#000"/><circle cx="13.3" cy="102.0" r="0.48" fill="#000"/><circle cx="13.3" cy="100.1" r="0.77" fill="#000"/><circle cx="14.7" cy="97.0" r="0.75" fill="#000"/><circle cx="3.7" cy="101.5" r="0.50" fill="#000"/><circle cx="11.8" cy="108.1" r="0.37" fill="#000"/><circle cx="6.2" cy="102.7" r="0.55" fill="#000"/><circle cx="13.3" cy="106.0" r="0.39" fill="#000"/><circle cx="8.0" cy="97.8" r="0.32" fill="#000"/><circle cx="17.2" cy="105.5" r="0.66" fill="#000"/><circle cx="14.9" cy="100.4" r="0.67" fill="#000"/><circle cx="10.2" cy="96.6" r="0.35" fill="#000"/><circle cx="8.4" cy="105.0" r="0.65" fill="#000"/><circle cx="39.6" cy="104.6" r="0.46" fill="#000"/><circle cx="34.6" cy="99.9" r="0.77" fill="#000"/><circle cx="34.1" cy="97.0" r="0.69" fill="#000"/><circle cx="29.6" cy="96.5" r="0.75" fill="#000"/><circle cx="30.8" cy="107.5" r="0.50" fill="#000"/><circle cx="29.3" cy="107.9" r="0.68" fill="#000"/><circle cx="37.0" cy="103.8" r="0.89" fill="#000"/><circle cx="33.2" cy="106.8" r="0.72" fill="#000"/><circle cx="39.8" cy="99.9" r="0.73" fill="#000"/><circle cx="34.9" cy="97.7" r="0.43" fill="#000"/><circle cx="35.8" cy="93.8" r="0.85" fill="#000"/><circle cx="31.1" cy="94.9" r="0.32" fill="#000"/><circle cx="25.9" cy="104.3" r="0.68" fill="#000"/><circle cx="37.0" cy="105.0" r="0.34" fill="#000"/><circle cx="35.2" cy="98.7" r="0.79" fill="#000"/><circle cx="27.0" cy="96.0" r="0.37" fill="#000"/><circle cx="39.0" cy="103.3" r="0.80" fill="#000"/><circle cx="35.9" cy="97.4" r="0.36" fill="#000"/><circle cx="26.9" cy="105.4" r="0.42" fill="#000"/><circle cx="30.6" cy="99.7" r="0.31" fill="#000"/><circle cx="29.6" cy="97.3" r="0.73" fill="#000"/><circle cx="31.5" cy="98.0" r="0.88" fill="#000"/><circle cx="33.8" cy="107.0" r="0.67" fill="#000"/><circle cx="25.7" cy="99.5" r="0.56" fill="#000"/><circle cx="38.3" cy="98.4" r="0.72" fill="#000"/><circle cx="34.3" cy="96.2" r="0.82" fill="#000"/><circle cx="28.6" cy="105.5" r="0.89" fill="#000"/><circle cx="25.3" cy="100.8" r="0.59" fill="#000"/><circle cx="38.7" cy="95.6" r="0.60" fill="#000"/><circle cx="31.1" cy="106.6" r="0.46" fill="#000"/><circle cx="41.2" cy="97.3" r="0.43" fill="#000"/><circle cx="37.1" cy="101.0" r="0.37" fill="#000"/><circle cx="36.0" cy="93.9" r="0.77" fill="#000"/><circle cx="37.1" cy="105.9" r="0.68" fill="#000"/><circle cx="31.2" cy="99.3" r="0.54" fill="#000"/><circle cx="28.7" cy="97.0" r="0.84" fill="#000"/><circle cx="33.7" cy="98.9" r="0.83" fill="#000"/><circle cx="29.2" cy="100.3" r="0.62" fill="#000"/><circle cx="38.0" cy="105.3" r="0.69" fill="#000"/><circle cx="31.1" cy="98.1" r="0.39" fill="#000"/><circle cx="39.5" cy="103.8" r="0.75" fill="#000"/><circle cx="28.1" cy="100.0" r="0.76" fill="#000"/><circle cx="35.0" cy="94.6" r="0.58" fill="#000"/><circle cx="40.2" cy="96.5" r="0.41" fill="#000"/><circle cx="30.3" cy="104.5" r="0.81" fill="#000"/><circle cx="27.8" cy="95.2" r="0.45" fill="#000"/><circle cx="30.8" cy="101.4" r="0.40" fill="#000"/><circle cx="30.8" cy="95.7" r="0.89" fill="#000"/><circle cx="37.6" cy="94.2" r="0.88" fill="#000"/><circle cx="26.9" cy="99.0" r="0.89" fill="#000"/><circle cx="38.7" cy="105.0" r="0.56" fill="#000"/><circle cx="28.5" cy="103.3" r="0.36" fill="#000"/><circle cx="28.7" cy="99.1" r="0.32" fill="#000"/><circle cx="32.0" cy="105.9" r="0.72" fill="#000"/><circle cx="33.7" cy="103.3" r="0.58" fill="#000"/><circle cx="27.6" cy="102.8" r="0.54" fill="#000"/><circle cx="37.8" cy="107.9" r="0.56" fill="#000"/><circle cx="35.0" cy="105.2" r="0.55" fill="#000"/><circle cx="29.1" cy="104.8" r="0.83" fill="#000"/><circle cx="38.4" cy="104.4" r="0.81" fill="#000"/><circle cx="36.8" cy="103.4" r="0.57" fill="#000"/><circle cx="30.5" cy="103.2" r="0.36" fill="#000"/><circle cx="32.3" cy="105.8" r="0.73" fill="#000"/><circle cx="35.9" cy="96.8" r="0.55" fill="#000"/><circle cx="32.9" cy="103.1" r="0.55" fill="#000"/><circle cx="36.7" cy="108.3" r="0.41" fill="#000"/><circle cx="36.3" cy="105.7" r="0.53" fill="#000"/><circle cx="33.5" cy="109.1" r="0.32" fill="#000"/><circle cx="34.4" cy="95.2" r="0.77" fill="#000"/><circle cx="41.2" cy="101.3" r="0.36" fill="#000"/><circle cx="35.0" cy="101.7" r="0.73" fill="#000"/><circle cx="33.9" cy="103.4" r="0.80" fill="#000"/><circle cx="34.1" cy="99.5" r="0.87" fill="#000"/><circle cx="28.8" cy="104.1" r="0.54" fill="#000"/><circle cx="38.2" cy="94.6" r="0.89" fill="#000"/><circle cx="31.2" cy="93.5" r="0.46" fill="#000"/><circle cx="32.0" cy="92.7" r="0.55" fill="#000"/><circle cx="32.3" cy="104.4" r="0.51" fill="#000"/><circle cx="29.7" cy="96.3" r="0.74" fill="#000"/><circle cx="41.2" cy="101.5" r="0.43" fill="#000"/><circle cx="38.8" cy="99.2" r="0.43" fill="#000"/><circle cx="27.4" cy="105.7" r="0.79" fill="#000"/><circle cx="36.0" cy="100.5" r="0.64" fill="#000"/><circle cx="31.2" cy="103.4" r="0.79" fill="#000"/><circle cx="39.1" cy="100.5" r="0.48" fill="#000"/><circle cx="34.5" cy="94.6" r="0.80" fill="#000"/><circle cx="31.2" cy="107.0" r="0.46" fill="#000"/><circle cx="31.6" cy="96.8" r="0.56" fill="#000"/><circle cx="37.5" cy="97.3" r="0.45" fill="#000"/><circle cx="30.3" cy="100.7" r="0.56" fill="#000"/><circle cx="58.3" cy="103.7" r="0.52" fill="#000"/><circle cx="62.9" cy="105.8" r="0.38" fill="#000"/><circle cx="61.6" cy="103.3" r="0.31" fill="#000"/><circle cx="58.7" cy="96.8" r="0.36" fill="#000"/><circle cx="49.9" cy="96.5" r="0.77" fill="#000"/><circle cx="53.4" cy="95.1" r="0.84" fill="#000"/><circle cx="61.0" cy="95.4" r="0.83" fill="#000"/><circle cx="57.8" cy="105.8" r="0.70" fill="#000"/><circle cx="62.7" cy="105.9" r="0.80" fill="#000"/><circle cx="50.9" cy="104.3" r="0.62" fill="#000"/><circle cx="60.1" cy="100.0" r="0.83" fill="#000"/><circle cx="56.9" cy="97.0" r="0.44" fill="#000"/><circle cx="49.9" cy="100.9" r="0.34" fill="#000"/><circle cx="55.4" cy="95.0" r="0.59" fill="#000"/><circle cx="56.0" cy="101.7" r="0.82" fill="#000"/><circle cx="55.5" cy="102.1" r="0.70" fill="#000"/><circle cx="61.8" cy="98.9" r="0.55" fill="#000"/><circle cx="58.3" cy="103.3" r="0.32" fill="#000"/><circle cx="57.9" cy="104.1" r="0.86" fill="#000"/><circle cx="56.2" cy="100.7" r="0.84" fill="#000"/><circle cx="58.1" cy="98.3" r="0.82" fill="#000"/><circle cx="53.7" cy="100.6" r="0.62" fill="#000"/><circle cx="60.6" cy="96.1" r="0.56" fill="#000"/><circle cx="54.7" cy="101.9" r="0.80" fill="#000"/><circle cx="52.5" cy="106.6" r="0.54" fill="#000"/><circle cx="56.1" cy="97.1" r="0.60" fill="#000"/><circle cx="64.1" cy="103.6" r="0.78" fill="#000"/><circle cx="53.1" cy="97.9" r="0.48" fill="#000"/><circle cx="57.5" cy="103.3" r="0.77" fill="#000"/><circle cx="62.6" cy="101.8" r="0.33" fill="#000"/><circle cx="57.8" cy="103.7" r="0.77" fill="#000"/><circle cx="63.0" cy="102.9" r="0.67" fill="#000"/><circle cx="58.2" cy="104.3" r="0.66" fill="#000"/><circle cx="59.1" cy="96.1" r="0.70" fill="#000"/><circle cx="55.3" cy="105.5" r="0.36" fill="#000"/><circle cx="60.7" cy="108.0" r="0.69" fill="#000"/><circle cx="53.8" cy="106.5" r="0.77" fill="#000"/><circle cx="57.1" cy="96.9" r="0.48" fill="#000"/><circle cx="54.7" cy="97.9" r="0.56" fill="#000"/><circle cx="58.4" cy="108.4" r="0.33" fill="#000"/><circle cx="57.1" cy="93.2" r="0.37" fill="#000"/><circle cx="61.3" cy="102.3" r="0.85" fill="#000"/><circle cx="55.1" cy="92.7" r="0.53" fill="#000"/><circle cx="57.6" cy="108.4" r="0.89" fill="#000"/><circle cx="55.6" cy="99.5" r="0.36" fill="#000"/><circle cx="58.5" cy="96.1" r="0.39" fill="#000"/><circle cx="59.1" cy="94.6" r="0.88" fill="#000"/><circle cx="59.7" cy="96.6" r="0.74" fill="#000"/><circle cx="60.7" cy="104.6" r="0.81" fill="#000"/><circle cx="59.9" cy="93.9" r="0.68" fill="#000"/><circle cx="59.6" cy="100.3" r="0.86" fill="#000"/><circle cx="52.8" cy="104.9" r="0.40" fill="#000"/><circle cx="62.1" cy="100.8" r="0.34" fill="#000"/><circle cx="53.7" cy="102.3" r="0.56" fill="#000"/><circle cx="59.0" cy="95.0" r="0.78" fill="#000"/><circle cx="53.7" cy="103.5" r="0.68" fill="#000"/><circle cx="54.6" cy="99.1" r="0.77" fill="#000"/><circle cx="57.1" cy="97.5" r="0.34" fill="#000"/><circle cx="61.6" cy="98.1" r="0.66" fill="#000"/><circle cx="57.7" cy="97.7" r="0.56" fill="#000"/><circle cx="62.6" cy="98.9" r="0.71" fill="#000"/><circle cx="57.7" cy="107.7" r="0.78" fill="#000"/><circle cx="52.0" cy="99.7" r="0.65" fill="#000"/><circle cx="61.4" cy="107.6" r="0.33" fill="#000"/><circle cx="61.7" cy="106.3" r="0.82" fill="#000"/><circle cx="57.2" cy="97.2" r="0.81" fill="#000"/><circle cx="61.2" cy="104.1" r="0.85" fill="#000"/><circle cx="53.4" cy="93.9" r="0.63" fill="#000"/><circle cx="61.1" cy="95.9" r="0.75" fill="#000"/><circle cx="57.8" cy="104.0" r="0.58" fill="#000"/><circle cx="51.0" cy="96.8" r="0.75" fill="#000"/><circle cx="61.0" cy="100.3" r="0.35" fill="#000"/><circle cx="61.2" cy="105.6" r="0.44" fill="#000"/><circle cx="57.4" cy="107.7" r="0.83" fill="#000"/><circle cx="56.4" cy="100.6" r="0.65" fill="#000"/><circle cx="50.7" cy="95.8" r="0.41" fill="#000"/><circle cx="59.4" cy="98.7" r="0.64" fill="#000"/><circle cx="54.3" cy="101.3" r="0.39" fill="#000"/><circle cx="53.9" cy="94.3" r="0.68" fill="#000"/><circle cx="60.9" cy="95.2" r="0.66" fill="#000"/><circle cx="53.4" cy="101.3" r="0.31" fill="#000"/><circle cx="62.2" cy="100.8" r="0.64" fill="#000"/><circle cx="51.9" cy="105.7" r="0.56" fill="#000"/><circle cx="50.9" cy="95.6" r="0.35" fill="#000"/><circle cx="48.4" cy="102.0" r="0.82" fill="#000"/><circle cx="55.3" cy="108.6" r="0.85" fill="#000"/><circle cx="48.6" cy="102.7" r="0.54" fill="#000"/><circle cx="51.9" cy="102.1" r="0.68" fill="#000"/><circle cx="63.8" cy="103.9" r="0.54" fill="#000"/><circle cx="55.1" cy="95.2" r="0.88" fill="#000"/><circle cx="76.5" cy="107.8" r="0.84" fill="#000"/><circle cx="83.9" cy="104.6" r="0.69" fill="#000"/><circle cx="73.0" cy="105.3" r="0.86" fill="#000"/><circle cx="82.0" cy="97.6" r="0.65" fill="#000"/><circle cx="83.4" cy="94.3" r="0.49" fill="#000"/><circle cx="74.9" cy="94.6" r="0.59" fill="#000"/><circle cx="73.4" cy="96.6" r="0.39" fill="#000"/><circle cx="82.7" cy="95.8" r="0.32" fill="#000"/><circle cx="78.1" cy="94.1" r="0.86" fill="#000"/><circle cx="84.8" cy="103.2" r="0.57" fill="#000"/><circle cx="76.3" cy="106.5" r="0.59" fill="#000"/><circle cx="81.2" cy="94.9" r="0.43" fill="#000"/><circle cx="71.5" cy="104.6" r="0.63" fill="#000"/><circle cx="75.0" cy="99.5" r="0.39" fill="#000"/><circle cx="75.1" cy="106.8" r="0.50" fill="#000"/><circle cx="73.4" cy="100.8" r="0.49" fill="#000"/><circle cx="85.7" cy="103.9" r="0.43" fill="#000"/><circle cx="78.6" cy="97.4" r="0.45" fill="#000"/><circle cx="73.9" cy="98.7" r="0.89" fill="#000"/><circle cx="72.2" cy="97.4" r="0.84" fill="#000"/><circle cx="71.5" cy="104.9" r="0.48" fill="#000"/><circle cx="84.2" cy="98.3" r="0.38" fill="#000"/><circle cx="79.5" cy="95.7" r="0.56" fill="#000"/><circle cx="86.0" cy="96.2" r="0.64" fill="#000"/><circle cx="72.8" cy="95.6" r="0.76" fill="#000"/><circle cx="82.6" cy="95.8" r="0.35" fill="#000"/><circle cx="72.0" cy="102.8" r="0.60" fill="#000"/><circle cx="75.2" cy="96.0" r="0.67" fill="#000"/><circle cx="82.5" cy="106.3" r="0.65" fill="#000"/><circle cx="83.0" cy="99.4" r="0.73" fill="#000"/><circle cx="76.2" cy="106.8" r="0.82" fill="#000"/><circle cx="78.9" cy="92.8" r="0.85" fill="#000"/><circle cx="78.6" cy="107.3" r="0.46" fill="#000"/><circle cx="73.7" cy="106.6" r="0.52" fill="#000"/><circle cx="73.3" cy="98.8" r="0.66" fill="#000"/><circle cx="70.6" cy="101.3" r="0.57" fill="#000"/><circle cx="79.3" cy="94.6" r="0.73" fill="#000"/><circle cx="84.4" cy="107.2" r="0.49" fill="#000"/><circle cx="82.6" cy="99.0" r="0.75" fill="#000"/><circle cx="86.7" cy="100.9" r="0.61" fill="#000"/><circle cx="79.5" cy="101.6" r="0.31" fill="#000"/><circle cx="74.8" cy="106.4" r="0.32" fill="#000"/><circle cx="72.1" cy="104.4" r="0.42" fill="#000"/><circle cx="70.8" cy="102.7" r="0.65" fill="#000"/><circle cx="79.4" cy="104.4" r="0.36" fill="#000"/><circle cx="85.3" cy="104.7" r="0.33" fill="#000"/><circle cx="72.6" cy="100.9" r="0.60" fill="#000"/><circle cx="75.3" cy="94.6" r="0.54" fill="#000"/><circle cx="72.8" cy="102.6" r="0.82" fill="#000"/><circle cx="73.0" cy="102.2" r="0.75" fill="#000"/><circle cx="73.3" cy="106.5" r="0.86" fill="#000"/><circle cx="77.1" cy="99.6" r="0.80" fill="#000"/><circle cx="79.4" cy="99.2" r="0.86" fill="#000"/><circle cx="83.7" cy="98.3" r="0.44" fill="#000"/><circle cx="76.2" cy="99.9" r="0.89" fill="#000"/><circle cx="84.4" cy="106.9" r="0.33" fill="#000"/><circle cx="79.3" cy="108.8" r="0.86" fill="#000"/><circle cx="74.7" cy="99.7" r="0.68" fill="#000"/><circle cx="76.7" cy="101.5" r="0.34" fill="#000"/><circle cx="77.9" cy="101.1" r="0.31" fill="#000"/><circle cx="81.3" cy="106.3" r="0.83" fill="#000"/><circle cx="81.4" cy="97.0" r="0.71" fill="#000"/><circle cx="75.1" cy="101.7" r="0.85" fill="#000"/><circle cx="81.1" cy="96.8" r="0.61" fill="#000"/><circle cx="77.9" cy="108.7" r="0.47" fill="#000"/><circle cx="75.7" cy="103.5" r="0.37" fill="#000"/><circle cx="80.6" cy="108.8" r="0.61" fill="#000"/><circle cx="75.1" cy="100.4" r="0.62" fill="#000"/><circle cx="72.7" cy="97.5" r="0.54" fill="#000"/><circle cx="75.4" cy="96.6" r="0.35" fill="#000"/><circle cx="79.8" cy="106.8" r="0.67" fill="#000"/><circle cx="80.2" cy="103.6" r="0.42" fill="#000"/><circle cx="82.6" cy="100.3" r="0.63" fill="#000"/><circle cx="80.9" cy="100.5" r="0.49" fill="#000"/><circle cx="74.6" cy="96.3" r="0.61" fill="#000"/><circle cx="77.0" cy="102.5" r="0.31" fill="#000"/><circle cx="76.5" cy="107.2" r="0.44" fill="#000"/><circle cx="80.0" cy="100.9" r="0.47" fill="#000"/><circle cx="83.6" cy="95.2" r="0.34" fill="#000"/><circle cx="85.3" cy="100.0" r="0.34" fill="#000"/><circle cx="77.1" cy="100.0" r="0.74" fill="#000"/><circle cx="72.4" cy="96.3" r="0.88" fill="#000"/><circle cx="83.1" cy="95.1" r="0.50" fill="#000"/><circle cx="76.5" cy="104.0" r="0.67" fill="#000"/><circle cx="84.9" cy="106.5" r="0.61" fill="#000"/><circle cx="83.1" cy="105.1" r="0.76" fill="#000"/><circle cx="78.6" cy="105.8" r="0.73" fill="#000"/><circle cx="83.5" cy="102.5" r="0.60" fill="#000"/><circle cx="86.9" cy="102.2" r="0.55" fill="#000"/><circle cx="83.8" cy="107.3" r="0.66" fill="#000"/><circle cx="101" cy="101" r="8.5" fill="#222"/><circle cx="99.3" cy="100.3" r="0.57" fill="#fff"/><circle cx="104.1" cy="98.1" r="0.53" fill="#fff"/><circle cx="101.8" cy="99.4" r="0.49" fill="#fff"/><circle cx="105.0" cy="105.9" r="0.60" fill="#fff"/><circle cx="100.2" cy="96.6" r="0.48" fill="#fff"/><circle cx="96.0" cy="102.1" r="0.65" fill="#fff"/><circle cx="98.5" cy="105.8" r="0.80" fill="#fff"/><circle cx="100.0" cy="106.7" r="0.31" fill="#fff"/><circle cx="94.7" cy="101.9" r="0.60" fill="#fff"/><circle cx="101.5" cy="108.0" r="0.61" fill="#fff"/><circle cx="101.2" cy="103.6" r="0.53" fill="#fff"/><circle cx="99.0" cy="102.3" r="0.51" fill="#fff"/><circle cx="107.3" cy="103.5" r="0.62" fill="#fff"/><circle cx="95.4" cy="99.2" r="0.54" fill="#fff"/><circle cx="101.9" cy="102.0" r="0.83" fill="#fff"/><circle cx="107.5" cy="100.8" r="0.56" fill="#fff"/><circle cx="98.8" cy="101.4" r="0.79" fill="#fff"/><circle cx="96.4" cy="98.5" r="0.89" fill="#fff"/><circle cx="105.6" cy="101.2" r="0.37" fill="#fff"/><circle cx="106.5" cy="103.7" r="0.79" fill="#fff"/><circle cx="99.9" cy="96.2" r="0.47" fill="#fff"/><circle cx="101.2" cy="101.1" r="0.41" fill="#fff"/><circle cx="96.6" cy="102.8" r="0.66" fill="#fff"/><circle cx="102.9" cy="94.6" r="0.55" fill="#fff"/><circle cx="105.0" cy="98.3" r="0.71" fill="#fff"/><circle cx="105.8" cy="102.2" r="0.70" fill="#fff"/><circle cx="96.8" cy="101.0" r="0.63" fill="#fff"/><circle cx="97.7" cy="103.1" r="0.62" fill="#fff"/><circle cx="99.8" cy="95.7" r="0.39" fill="#fff"/><circle cx="104.6" cy="95.5" r="0.36" fill="#fff"/><circle cx="96.4" cy="101.3" r="0.79" fill="#fff"/><circle cx="102.6" cy="105.3" r="0.34" fill="#fff"/><circle cx="98.5" cy="104.0" r="0.51" fill="#fff"/><circle cx="96.4" cy="97.7" r="0.36" fill="#fff"/><circle cx="106.7" cy="102.2" r="0.51" fill="#fff"/><circle cx="100.3" cy="99.4" r="0.33" fill="#fff"/><circle cx="106.5" cy="102.2" r="0.88" fill="#fff"/><circle cx="100.2" cy="102.7" r="0.45" fill="#fff"/><circle cx="106.0" cy="98.4" r="0.84" fill="#fff"/><circle cx="105.4" cy="98.3" r="0.66" fill="#fff"/><path d="M5 121 H18 M28 120 H40" stroke="#222" stroke-width="2"/><g fill="#2030c0"><path d="M89 19 L89 22 L86 22Z"/><path d="M45 42 L45 45 L42 45Z"/></g><g fill="#2030c0"><rect x="19" y="41" width="3" height="3"/><rect x="41" y="41" width="3" height="3"/><rect x="64" y="41" width="3" height="3"/><rect x="87" y="41" width="3" height="3"/><rect x="109" y="41" width="3" height="3"/><rect x="87" y="19" width="3" height="3"/><rect x="109" y="19" width="3" height="3"/><rect x="19" y="64" width="3" height="3"/></g><g fill="#d02020"><rect x="41" y="64" width="3" height="3"/><rect x="64" y="64" width="3" height="3"/><rect x="87" y="64" width="3" height="3"/><rect x="109" y="64" width="3" height="3"/><rect x="19" y="87" width="3" height="3"/><rect x="41" y="87" width="3" height="3"/><rect x="64" y="109" width="3" height="3"/><rect x="87" y="109" width="3" height="3"/><rect x="109" y="109" width="3" height="3"/></g></svg>
<div class="a" style="left:915px;top:488px;width:129px;height:1px;background:#c8c8c8"></div>
<div class="a" style="left:915px;top:489px;width:129px;height:14px;background:#f8f8f8;border:1px solid #d2d2d2;border-radius:4px 0 0 4px"></div>
<div class="t" style="left:921px;top:492.5px;font-size:8px;color:#111">Basic,</div>
<svg class="a" style="left:1028px;top:493px;" width="11" height="7" viewBox="0 0 11 7"><path d="M1 1 L5.5 5.5 L10 1" fill="none" stroke="#d05020" stroke-width="1.8"/></svg>
<div class="a" style="left:915px;top:505px;width:104px;height:17px;background:linear-gradient(90deg,#dadada 0,#dadada 8px,#f8f8f8 8px);border:1px solid #c6c6c6;border-radius:3px 0 0 3px"></div>
<div class="t" style="left:920px;top:509.9px;font-size:8.3px;color:#111">Spacing</div>
<div class="t" style="left:960px;top:509.9px;font-size:8.3px;width:54px;text-align:right;color:#111">10.0</div>
<div class="a" style="left:1019px;top:505px;width:16px;height:17px;background:#e8e8e8;border:1px solid #c6c6c6;border-left:none"></div>
<div class="a" style="left:1023px;top:513px;width:9px;height:2px;background:#b03030"></div>
<div class="a" style="left:1035px;top:505px;width:12px;height:17px;background:#f0f0f0;border:1px solid #c6c6c6"></div>
<svg class="a" style="left:1037px;top:508px;" width="8" height="10" viewBox="0 0 8 10"><path d="M5 0 V10 M0 5 H10" stroke="#111" stroke-width="1.3"/></svg>
<div class="a" style="left:378px;top:126px;width:436px;height:363px;background:#f0f0f0;border:1px solid #a4a4a4;border-left-color:#888;box-shadow:0 0 3px rgba(0,0,0,.15)"></div>
<div class="a" style="left:379px;top:127px;width:433px;height:24px;background:#f3f3f3"></div>
<svg class="a" style="left:384px;top:131px;" width="12" height="11" viewBox="0 0 12 11"><rect x="3" y=".5" width="6" height="3" fill="#fff" stroke="#333" stroke-width=".9"/><rect x=".5" y="3.5" width="11" height="4.5" fill="#bbb" stroke="#333" stroke-width=".9"/><rect x="3" y="6.5" width="6" height="4" fill="#fff" stroke="#333" stroke-width=".9"/></svg>
<div class="t" style="left:398px;top:132.8px;font-size:8.5px;color:#111">Print</div>
<svg class="a" style="left:798px;top:131px;" width="10" height="10" viewBox="0 0 10 10"><path d="M.5 .5 L9.5 9.5 M9.5 .5 L.5 9.5" stroke="#333" stroke-width=".9"/></svg>
<div class="a" style="left:385px;top:166px;width:423px;height:298px;background:#ebebeb;border:1px solid #d2d2d2"></div>
<div class="a" style="left:386px;top:153px;width:30px;height:13px;background:#efefef"></div>
<div class="t" style="left:388px;top:156.0px;font-size:7px;color:#111">General</div>
<div class="a" style="left:416px;top:152px;width:56px;height:15px;background:#f6f6f6;border:1px solid #d6d6d6;border-bottom:none"></div>
<div class="t" style="left:420.5px;top:155.5px;font-size:7px;color:#111">Image Settings</div>
<div class="t" style="left:393px;top:176.0px;font-size:8px;font-weight:bold;color:#111">Size</div>
<div class="t" style="left:654.5px;top:176.5px;font-size:8px;font-weight:bold;color:#111">Preview</div>
<div class="t" style="left:401px;top:197.1px;font-size:7.8px;color:#111">Width:</div>
<div class="a" style="left:445px;top:190px;width:54px;height:22px;background:#fcfcfc;border:1px solid #d4d4d4;border-radius:3px 0 0 3px"></div>
<div class="t" style="left:451px;top:197.8px;font-size:7.3px;color:#111">210.00</div>
<div class="a" style="left:499px;top:190px;width:23px;height:22px;background:#e8e8e8;border:1px solid #d4d4d4;border-left:none"></div>
<div class="a" style="left:506px;top:200px;width:10px;height:2px;background:#b02828"></div>
<div class="a" style="left:522px;top:190px;width:23px;height:22px;background:#ececec;border:1px solid #d4d4d4;border-left:none;border-radius:0 3px 3px 0"></div>
<svg class="a" style="left:529px;top:196px;" width="10" height="10" viewBox="0 0 10 10"><path d="M5 0 V10 M0 5 H10" stroke="#555" stroke-width="1.3"/></svg>
<div class="t" style="left:401px;top:221.1px;font-size:7.8px;color:#111">Height:</div>
<div class="a" style="left:445px;top:214px;width:54px;height:22px;background:#fcfcfc;border:1px solid #d4d4d4;border-radius:3px 0 0 3px"></div>
<div class="t" style="left:451px;top:221.8px;font-size:7.3px;color:#111">157.50</div>
<div class="a" style="left:499px;top:214px;width:23px;height:22px;background:#e8e8e8;border:1px solid #d4d4d4;border-left:none"></div>
<div class="a" style="left:506px;top:224px;width:10px;height:2px;background:#b02828"></div>
<div class="a" style="left:522px;top:214px;width:23px;height:22px;background:#ececec;border:1px solid #d4d4d4;border-left:none;border-radius:0 3px 3px 0"></div>
<svg class="a" style="left:529px;top:220px;" width="10" height="10" viewBox="0 0 10 10"><path d="M5 0 V10 M0 5 H10" stroke="#555" stroke-width="1.3"/></svg>
<div class="a" style="left:546px;top:214px;width:40px;height:22px;background:#dedede;border:1px solid #c8c8c8;border-radius:4px"></div>
<div class="t" style="left:554px;top:221.6px;font-size:7.8px;color:#111">mm</div>
<svg class="a" style="left:573px;top:223px;" width="7" height="5" viewBox="0 0 7 5"><path d="M.7 .7 L3.5 3.5 L6.3 .7" fill="none" stroke="#111" stroke-width="1.3"/></svg>
<div class="t" style="left:401px;top:248.1px;font-size:7.8px;color:#111">X resolution:</div>
<div class="a" style="left:445px;top:241px;width:54px;height:22px;background:#fcfcfc;border:1px solid #d4d4d4;border-radius:3px 0 0 3px"></div>
<div class="t" style="left:451px;top:248.8px;font-size:7.3px;color:#111">120.952</div>
<div class="a" style="left:499px;top:241px;width:23px;height:22px;background:#e8e8e8;border:1px solid #d4d4d4;border-left:none"></div>
<div class="a" style="left:506px;top:251px;width:10px;height:2px;background:#d89090"></div>
<div class="a" style="left:522px;top:241px;width:23px;height:22px;background:#ececec;border:1px solid #d4d4d4;border-left:none;border-radius:0 3px 3px 0"></div>
<svg class="a" style="left:529px;top:247px;" width="10" height="10" viewBox="0 0 10 10"><path d="M5 0 V10 M0 5 H10" stroke="#111" stroke-width="1.3"/></svg>
<div class="t" style="left:401px;top:271.6px;font-size:7.8px;color:#111">Y resolution:</div>
<div class="a" style="left:445px;top:265px;width:54px;height:22px;background:#fcfcfc;border:1px solid #d4d4d4;border-radius:3px 0 0 3px"></div>
<div class="t" style="left:451px;top:272.9px;font-size:7.3px;color:#111">120.952</div>
<div class="a" style="left:499px;top:265px;width:23px;height:22px;background:#e8e8e8;border:1px solid #d4d4d4;border-left:none"></div>
<div class="a" style="left:506px;top:275px;width:10px;height:2px;background:#d89090"></div>
<div class="a" style="left:522px;top:265px;width:23px;height:22px;background:#ececec;border:1px solid #d4d4d4;border-left:none;border-radius:0 3px 3px 0"></div>
<svg class="a" style="left:529px;top:271px;" width="10" height="10" viewBox="0 0 10 10"><path d="M5 0 V10 M0 5 H10" stroke="#111" stroke-width="1.3"/></svg>
<div class="a" style="left:477px;top:269px;width:1px;height:12px;background:#111"></div>
<svg class="a" style="left:554px;top:246px;" width="8" height="36" viewBox="0 0 8 36"><path d="M2 1 H5 V5" fill="none" stroke="#222" stroke-width="1.5"/><rect x="2" y="12" width="4" height="4.5" rx="1.2" fill="none" stroke="#777" stroke-width="1"/><rect x="2" y="16.5" width="4" height="4.5" rx="1.2" fill="none" stroke="#777" stroke-width="1"/><path d="M2 35 H5 V31" fill="none" stroke="#222" stroke-width="1.5"/></svg>
<div class="a" style="left:571px;top:265px;width:62px;height:22px;background:#dedede;border:1px solid #c8c8c8;border-radius:4px"></div>
<div class="t" style="left:578px;top:272.1px;font-size:7.8px;color:#111">pixels/in</div>
<svg class="a" style="left:620px;top:274px;" width="7" height="5" viewBox="0 0 7 5"><path d="M.7 .7 L3.5 3.5 L6.3 .7" fill="none" stroke="#111" stroke-width="1.3"/></svg>
<div class="a" style="left:401px;top:291px;width:246px;height:22px;background:#dcdcdc;border:1px solid #c4c4c4;border-radius:4px"></div>
<div class="t" style="left:401px;top:298.1px;font-size:7.8px;width:246px;text-align:center;color:#111;-webkit-text-stroke:.4px #111">Load Defaults</div>
<div class="t" style="left:393.5px;top:323.0px;font-size:8px;font-weight:bold;color:#111">Position</div>
<div class="t" style="left:401px;top:345.1px;font-size:7.8px;color:#111">Left:</div>
<div class="a" style="left:449px;top:338px;width:34px;height:22px;background:#fcfcfc;border:1px solid #d4d4d4;border-radius:3px 0 0 3px"></div>
<div class="t" style="left:455px;top:345.9px;font-size:7.3px;color:#111">0.00</div>
<div class="a" style="left:483px;top:338px;width:23px;height:22px;background:#e8e8e8;border:1px solid #d4d4d4;border-left:none"></div>
<div class="a" style="left:490px;top:348px;width:10px;height:2px;background:#d89090"></div>
<div class="a" style="left:506px;top:338px;width:23px;height:22px;background:#ececec;border:1px solid #d4d4d4;border-left:none;border-radius:0 3px 3px 0"></div>
<svg class="a" style="left:513px;top:344px;" width="10" height="10" viewBox="0 0 10 10"><path d="M5 0 V10 M0 5 H10" stroke="#555" stroke-width="1.3"/></svg>
<div class="t" style="left:534.5px;top:345.1px;font-size:7.8px;color:#111">Right:</div>
<div class="a" style="left:567px;top:338px;width:33px;height:22px;background:#fcfcfc;border:1px solid #d4d4d4;border-radius:3px 0 0 3px"></div>
<div class="t" style="left:573px;top:345.9px;font-size:7.3px;color:#111">0.00</div>
<div class="a" style="left:600px;top:338px;width:23px;height:22px;background:#e8e8e8;border:1px solid #d4d4d4;border-left:none"></div>
<div class="a" style="left:607px;top:348px;width:10px;height:2px;background:#d89090"></div>
<div class="a" style="left:623px;top:338px;width:23px;height:22px;background:#ececec;border:1px solid #d4d4d4;border-left:none;border-radius:0 3px 3px 0"></div>
<svg class="a" style="left:630px;top:344px;" width="10" height="10" viewBox="0 0 10 10"><path d="M5 0 V10 M0 5 H10" stroke="#555" stroke-width="1.3"/></svg>
<div class="t" style="left:401px;top:369.1px;font-size:7.8px;color:#111">Top:</div>
<div class="a" style="left:449px;top:362px;width:34px;height:22px;background:#fcfcfc;border:1px solid #d4d4d4;border-radius:3px 0 0 3px"></div>
<div class="t" style="left:455px;top:369.9px;font-size:7.3px;color:#111">69.75</div>
<div class="a" style="left:483px;top:362px;width:23px;height:22px;background:#e8e8e8;border:1px solid #d4d4d4;border-left:none"></div>
<div class="a" style="left:490px;top:372px;width:10px;height:2px;background:#b02828"></div>
<div class="a" style="left:506px;top:362px;width:23px;height:22px;background:#ececec;border:1px solid #d4d4d4;border-left:none;border-radius:0 3px 3px 0"></div>
<svg class="a" style="left:513px;top:368px;" width="10" height="10" viewBox="0 0 10 10"><path d="M5 0 V10 M0 5 H10" stroke="#111" stroke-width="1.3"/></svg>
<div class="t" style="left:534.5px;top:369.1px;font-size:7.8px;color:#111">Bottom:</div>
<div class="a" style="left:567px;top:362px;width:33px;height:22px;background:#fcfcfc;border:1px solid #d4d4d4;border-radius:3px 0 0 3px"></div>
<div class="t" style="left:573px;top:369.9px;font-size:7.3px;color:#111">69.75</div>
<div class="a" style="left:600px;top:362px;width:23px;height:22px;background:#e8e8e8;border:1px solid #d4d4d4;border-left:none"></div>
<div class="a" style="left:607px;top:372px;width:10px;height:2px;background:#b02828"></div>
<div class="a" style="left:623px;top:362px;width:23px;height:22px;background:#ececec;border:1px solid #d4d4d4;border-left:none;border-radius:0 3px 3px 0"></div>
<svg class="a" style="left:630px;top:368px;" width="10" height="10" viewBox="0 0 10 10"><path d="M5 0 V10 M0 5 H10" stroke="#111" stroke-width="1.3"/></svg>
<div class="t" style="left:401px;top:395.1px;font-size:7.8px;color:#111">Center:</div>
<div class="a" style="left:449px;top:388px;width:198px;height:22px;background:#dcdcdc;border:1px solid #c4c4c4;border-radius:4px"></div>
<div class="t" style="left:460px;top:395.1px;font-size:7.8px;color:#111">Both</div>
<svg class="a" style="left:630px;top:396px;" width="9" height="6" viewBox="0 0 9 6"><path d="M.8 .8 L4.5 4.5 L8.2 .8" fill="none" stroke="#111" stroke-width="1.5"/></svg>
<div class="a" style="left:396px;top:420px;width:11px;height:11px;background:#fafafa;border:1px solid #bdbdbd;border-radius:2px"></div>
<div class="t" style="left:409.5px;top:421.6px;font-size:7.8px;color:#111">Ignore Page Margins</div>
<div class="a" style="left:396px;top:442px;width:11px;height:11px;background:#fafafa;border:1px solid #bdbdbd;border-radius:2px"></div>
<div class="t" style="left:409.5px;top:443.6px;font-size:7.8px;color:#111">Draw Crop Marks</div>
<div class="a" style="left:663px;top:190px;width:134px;height:189px;background:#fff;border:1px solid #555;border-right-color:#888;border-bottom-color:#777"></div>
<svg class="a" style="left:664px;top:235px;" width="133" height="99" viewBox="0 0 133 99"><defs><linearGradient id="pg" x1="0" y1="0" x2="1" y2="0"><stop offset="0" stop-color="#58d028"/><stop offset=".45" stop-color="#60b028"/><stop offset="1" stop-color="#90c830"/></linearGradient><radialGradient id="pg2" cx=".75" cy=".15" r=".35"><stop offset="0" stop-color="#c89838"/><stop offset="1" stop-color="#d09040" stop-opacity="0"/></radialGradient><radialGradient id="pgd"><stop offset="0" stop-color="#2a6a18" stop-opacity=".45"/><stop offset="1" stop-color="#2a6a18" stop-opacity="0"/></radialGradient><radialGradient id="pg3" cx=".1" cy=".5" r=".5"><stop offset="0" stop-color="#80e030"/><stop offset="1" stop-color="#80e030" stop-opacity="0"/></radialGradient></defs><rect width="133" height="99" fill="url(#pg)"/><rect width="133" height="99" fill="url(#pg2)"/><rect width="133" height="99" fill="url(#pg3)"/><ellipse cx="50" cy="45" rx="34" ry="32" fill="url(#pgd)"/><g fill="#d8d890" fill-opacity=".35" stroke="#e0e0a0" stroke-opacity=".6" stroke-width=".8"><circle cx="24" cy="14" r="5.5"/><circle cx="42" cy="14" r="5.5"/><circle cx="5" cy="33" r="5"/><circle cx="20" cy="35" r="5.5"/><circle cx="36" cy="43" r="5.5"/><circle cx="47" cy="35" r="5.5"/><circle cx="76" cy="2" r="5"/><circle cx="9" cy="65" r="5"/></g><circle cx="70" cy="21" r="9" fill="#90b070" opacity=".55"/><circle cx="44" cy="54" r="8" fill="#b0c050" opacity=".4"/><path d="M30 62 Q60 66 80 82 Q92 92 100 99 L0 99 L0 76 Q12 64 30 62Z" fill="#88e838" opacity=".85"/><path d="M5 80 Q40 76 66 99" fill="none" stroke="#b8f060" stroke-width="2"/><path d="M56 45 Q70 28 86 19 Q100 12 110 14 L114 21 Q110 35 111 47 Q118 60 108 74 Q98 80 91 78 Q75 74 66 70 Q57 64 54 56 Z" fill="#58d850"/><path d="M60 50 Q75 35 92 28 M70 60 Q85 45 100 40 M75 68 Q90 60 105 58 M64 56 L70 52 M82 64 L88 58 M95 50 L102 46" stroke="#8a9838" stroke-width="2.5" fill="none" opacity=".85"/><g fill="#b0f060" opacity=".8"><circle cx="72" cy="45" r="2"/><circle cx="84" cy="52" r="2"/><circle cx="96" cy="62" r="2.5"/><circle cx="78" cy="36" r="1.8"/></g><path d="M86 19 Q100 12 110 14 L114 21 Q104 22 90 27Z" fill="#70e8e0"/><circle cx="98" cy="24" r="2.5" fill="#60e8e0"/><circle cx="100" cy="35" r="2" fill="#70e8d0"/><circle cx="93" cy="37" r="2" fill="#70e8d0"/><path d="M56 45 Q70 28 86 19 Q100 12 110 14 L114 21 Q110 35 111 47 Q118 60 108 74 Q98 80 91 78 Q75 74 66 70 Q57 64 54 56 Z" fill="none" stroke="#50e0e8" stroke-width="1.3"/><path d="M56 44 L50 29 M58 44 L61 29" stroke="#40d8e0" stroke-width="1"/><circle cx="104" cy="24" r="1.3" fill="#111"/><path d="M103 72 Q108 85 104 99 L116 99 Q118 85 112 70Z" fill="#50e8f0" opacity=".9"/><path d="M114 52 Q130 62 128 80 Q126 92 120 99" fill="none" stroke="#60e0e0" stroke-width="1.2"/><path d="M114 52 Q130 62 128 80 Q126 92 120 99 L112 99 Q116 80 114 52Z" fill="#68e070" opacity=".6"/></svg>
<div class="a" style="left:379px;top:464px;width:433px;height:24px;background:#f0f0f0"></div>
<div class="a" style="left:652px;top:470px;width:49px;height:14px;background:#fdfdfd;border:1.3px solid #1f4fa0;border-radius:3px"></div>
<div class="t" style="left:652px;top:473.5px;font-size:7px;width:49px;text-align:center;color:#111">Print</div>
<div class="a" style="left:706px;top:470px;width:49px;height:14px;background:#fdfdfd;border:1px solid #c4c4c4;border-radius:3px"></div>
<div class="t" style="left:706px;top:473.4px;font-size:7.3px;width:49px;text-align:center;color:#111">Cancel</div>
<div class="a" style="left:760px;top:470px;width:48px;height:14px;background:#f8f8f8;border:1px solid #dedede;border-radius:3px"></div>
<div class="t" style="left:760px;top:473.4px;font-size:7.3px;width:48px;text-align:center;color:#777">Apply</div>
<div class="a" style="left:271px;top:522px;width:773px;height:32px;background:linear-gradient(90deg,#eaecef,#eef0f2 50%,#eceef0);border-top:1px solid #d8d8d8"></div>
<svg class="a" style="left:491px;top:530px;" width="15" height="15" viewBox="0 0 15 15"><defs><linearGradient id="wl" x1="0" y1="0" x2="1" y2="1"><stop offset="0" stop-color="#48b4f8"/><stop offset="1" stop-color="#1a70d8"/></linearGradient></defs><rect x="0" y="0" width="7" height="7" fill="url(#wl)"/><rect x="8" y="0" width="7" height="7" fill="url(#wl)"/><rect x="0" y="8" width="7" height="7" fill="url(#wl)"/><rect x="8" y="8" width="7" height="7" fill="url(#wl)"/></svg>
<div class="a" style="left:515px;top:528px;width:146px;height:20px;background:#fbfbfb;border:1px solid #dcdcdc;border-radius:10px"></div>
<svg class="a" style="left:524px;top:532px;" width="11" height="11" viewBox="0 0 11 11"><circle cx="4.5" cy="4.5" r="3.6" fill="none" stroke="#111" stroke-width="1.4"/><path d="M7 7 L10.5 10.5" stroke="#111" stroke-width="1.6"/></svg>
<div class="t" style="left:539px;top:533.8px;font-size:8.5px;-webkit-text-stroke:0;color:#444">Search</div>
<svg class="a" style="left:669px;top:533px;" width="13" height="12" viewBox="0 0 13 12"><rect x="0" y="3" width="9" height="9" fill="#111"/><rect x="4" y="0" width="9" height="9" fill="#bbb"/><rect x="4" y="3" width="5" height="6" fill="#333"/></svg>
<svg class="a" style="left:698px;top:530px;" width="17" height="16" viewBox="0 0 17 16"><path d="M0 2 H6 L8 4 H17 V15 H0 Z" fill="#e8b830"/><rect x="0" y="6" width="17" height="9" fill="#f5cf50"/><rect x="3" y="11" width="11" height="4" fill="#1e70c8"/></svg>
<svg class="a" style="left:728px;top:530px;" width="13" height="16" viewBox="0 0 13 16"><path d="M1 4 H12 V15 H1 Z" fill="#1a3a7a"/><path d="M4 4 Q6.5 0 9 4" fill="none" stroke="#1a3a7a" stroke-width="1.3"/><rect x="4" y="7" width="2.5" height="2.5" fill="#f04020"/><rect x="7" y="7" width="2.5" height="2.5" fill="#40c020"/><rect x="4" y="10" width="2.5" height="2.5" fill="#20a0f0"/><rect x="7" y="10" width="2.5" height="2.5" fill="#f0c020"/></svg>
<div class="a" style="left:753px;top:526px;width:24px;height:24px;background:#f7f7f7;border-radius:4px"></div>
<svg class="a" style="left:756px;top:529px;" width="18" height="15" viewBox="0 0 18 15"><path d="M2 6 Q5 2 10 3 L16 0 Q15 5 16 8 Q14 13 8 13 Q3 13 2 10Z" fill="#6a5e55"/><circle cx="4" cy="6" r="2" fill="#fff" stroke="#000" stroke-width=".6"/><circle cx="8" cy="6" r="2.2" fill="#fff" stroke="#000" stroke-width=".6"/><circle cx="12" cy="6" r="2.2" fill="#fff" stroke="#000" stroke-width=".6"/><path d="M13 11 L17 14" stroke="#222" stroke-width="1.5"/></svg>
<div class="a" style="left:760px;top:548px;width:10px;height:2px;background:#1a5fc4;border-radius:1px"></div>
<svg class="a" style="left:869px;top:535px;" width="10" height="6" viewBox="0 0 10 6"><path d="M1 5 L5 1 L9 5" fill="none" stroke="#222" stroke-width="1.2"/></svg>
<div class="t" style="left:891px;top:529.7px;font-size:7.6px;width:18px;text-align:center;-webkit-text-stroke:0;color:#222">ENG</div>
<div class="t" style="left:891px;top:540.1px;font-size:7.8px;width:18px;text-align:center;-webkit-text-stroke:0;color:#222">UK</div>
<svg class="a" style="left:919px;top:533px;" width="13" height="13" viewBox="0 0 13 13"><circle cx="6.5" cy="6.5" r="5.5" fill="none" stroke="#222" stroke-width="1.1"/><path d="M1 6.5 H12 M6.5 1 Q3 6.5 6.5 12 M6.5 1 Q10 6.5 6.5 12" fill="none" stroke="#222" stroke-width=".9"/></svg>
<svg class="a" style="left:936px;top:533px;" width="12" height="13" viewBox="0 0 12 13"><path d="M1 4.5 H3.5 L7 1.5 V11.5 L3.5 8.5 H1 Z" fill="none" stroke="#222" stroke-width="1"/><path d="M9 4 Q10.5 6.5 9 9 M10.5 2.5 Q13 6.5 10.5 10.5" fill="none" stroke="#222" stroke-width="1"/></svg>
<svg class="a" style="left:952px;top:534px;" width="12" height="11" viewBox="0 0 12 11"><rect x="1" y="3" width="9" height="6" rx="1.5" fill="none" stroke="#222" stroke-width="1"/><rect x="10" y="5" width="1.5" height="2" fill="#222"/><path d="M3 1 L5 3" stroke="#222"/></svg>
<div class="t" style="left:960px;top:529.0px;font-size:8px;width:55.5px;text-align:right;-webkit-text-stroke:0;color:#222">08:19</div>
<div class="t" style="left:960px;top:539.5px;font-size:8px;width:55.5px;text-align:right;-webkit-text-stroke:0;color:#222">03/05/2025</div>
<svg class="a" style="left:1021px;top:533px;" width="12" height="13" viewBox="0 0 12 13"><path d="M6 1 Q2 1 2 6 V9 L1 10.5 H11 L10 9 V6 Q10 1 6 1Z" fill="none" stroke="#222" stroke-width="1"/><path d="M4.5 11.5 Q6 13 7.5 11.5" fill="none" stroke="#222"/></svg>
</body></html>
